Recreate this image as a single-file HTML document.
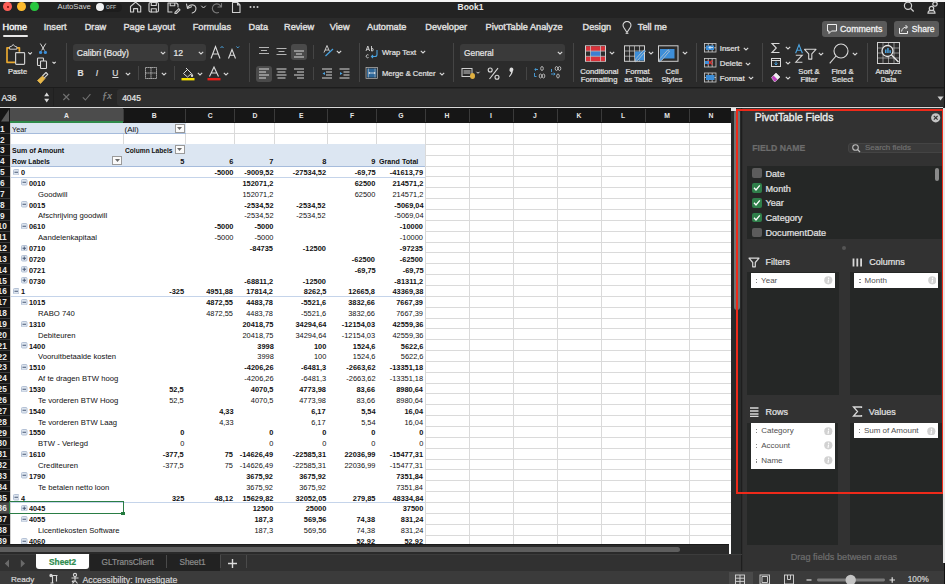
<!DOCTYPE html><html><head><meta charset="utf-8"><style>
*{margin:0;padding:0;box-sizing:border-box}
html,body{width:945px;height:584px;overflow:hidden;background:#2c2c2c;font-family:"Liberation Sans",sans-serif}
.a{position:absolute}
.t{position:absolute;white-space:nowrap;line-height:1}
#titlebar{left:0;top:0;width:945px;height:14px;background:#252525}
#tabs{left:0;top:14px;width:945px;height:24px;background:#2b2b2b}
#ribbon{left:0;top:38px;width:945px;height:49px;background:#2b2b2b}
#fbar{left:0;top:87px;width:945px;height:20px;background:#262626}
.tab{color:#e6e6e6;font-size:9.2px;font-weight:normal;top:23px;-webkit-text-stroke:.45px currentColor}
.rt{color:#e8e8e8;font-size:7.5px;font-weight:bold}
.sep{position:absolute;width:1px;background:#444}
.cell{position:absolute;white-space:nowrap;line-height:1;font-size:7.4px;color:#111}
.b{font-weight:bold}
.num{text-align:right}
.hdr{position:absolute;background:#161616;color:#e0e0e0;font-size:7px;font-weight:bold;text-align:center;line-height:14px}
.rh{position:absolute;left:0;width:10px;background:#161616;color:#e6e6e6;font-size:7.5px;font-weight:bold;overflow:hidden}
.rh span{position:absolute;right:3px;bottom:1px;line-height:1}
.btn{position:absolute;width:6px;height:6px;border:1px solid #a9b6c9;background:#e9eef5;border-radius:1px}
.btn i{position:absolute;left:1px;top:1.5px;width:2px;height:1px;background:#5a6a85}
</style></head><body>
<div class="a" style="left:0;top:0;width:945px;height:2px;background:#f4f4f4"></div>
<div class="a" id="tabs"></div>
<div class="a" id="titlebar" style="top:2px;height:15.6px;background:#232323"></div>
<div class="a" id="ribbon"></div>
<div class="a" id="fbar"></div>
<div class="a" style="left:3.1999999999999993px;top:2.3px;width:8.8px;height:8.8px;border-radius:50%;background:#fe5f57"></div>
<div class="a" style="left:16.9px;top:2.3px;width:8.8px;height:8.8px;border-radius:50%;background:#febc2e"></div>
<div class="a" style="left:30.4px;top:2.3px;width:8.8px;height:8.8px;border-radius:50%;background:#28c840"></div>
<div class="a" style="left:6.6px;top:5.7px;width:2px;height:2px;border-radius:50%;background:#7a0d06"></div>
<div class="t" style="left:57.5px;top:3.3px;font-size:7.7px;color:#d8d8d8">AutoSave</div>
<div class="a" style="left:95px;top:2.5px;width:27px;height:9px;border-radius:5px;background:#1d1d1d"></div>
<div class="a" style="left:95.5px;top:3px;width:8px;height:8px;border-radius:50%;background:#f2f2f2"></div>
<div class="t" style="left:106px;top:5px;font-size:5px;color:#aaa;font-weight:bold">OFF</div>
<div class="t" style="left:457.5px;top:3px;font-size:8.5px;color:#e8e8e8;font-weight:bold">Book1</div>
<svg class="a" style="left:128px;top:0;width:140px;height:14px" viewBox="128 0 140 14">
<g fill="none" stroke="#cfcfcf" stroke-width="1.1" stroke-linejoin="round" stroke-linecap="round">
<path d="M130.5 12V6.5L135.6 2.2L140.7 6.5V12H137.6V8.6H133.6V12Z"/>
<rect x="149" y="2.5" width="9.5" height="9.5" rx="1.5"/><path d="M151.3 2.5v3h5v-3M151.3 12V8.8h5V12"/>
<path d="M168 3h8.5l1.5 1.5v2.5M168 3v9h4M170.2 3v2.8h4.6V3M175 12.5l3.8-3.8 1.2 1.2-3.8 3.8h-1.2z"/>
<path d="M186.5 4l1 4.5 4-1.8M187.4 8.2c1-2.6 4-4 6.5-3 2 .8 2.6 3.3 1.5 5.5-.7 1.3-2 2-3.2 2.3"/>
<path d="M201.5 6l2 2 2-2" stroke-width="1"/>
<path d="M221.5 3.5v3.5H218M221 6.8c-.8-2.3-3.5-3.5-5.8-2.6-2.3.9-3.4 3.6-2.5 5.8.9 2.3 3.6 3.4 5.8 2.5" stroke="#7a7a7a"/>
<path d="M232.5 2.5h5l2.5 2.5v7.5h-7.5zM237.5 2.5V5H240"/>
</g>
<g fill="#cfcfcf"><circle cx="250.5" cy="7" r="1"/><circle cx="254" cy="7" r="1"/><circle cx="257.5" cy="7" r="1"/></g>
</svg>
<svg class="a" style="left:900px;top:0;width:45px;height:14px" viewBox="900 0 45 14">
<g fill="none" stroke="#d0d0d0" stroke-width="1.2"><circle cx="908" cy="5.8" r="3.6"/><path d="M910.7 8.5l3 3"/>
<circle cx="931.5" cy="8.5" r="2.2"/><path d="M928 13.2c0-2 1.5-2.8 3.5-2.8s3.5.8 3.5 2.8z"/><circle cx="935" cy="4" r="2.2"/></g></svg>
<div class="t tab" style="left:2.5px;color:#f2f2f2">Home</div>
<div class="t tab" style="left:43.7px;color:#dcdcdc">Insert</div>
<div class="t tab" style="left:84.7px;color:#dcdcdc">Draw</div>
<div class="t tab" style="left:123.4px;color:#dcdcdc">Page Layout</div>
<div class="t tab" style="left:192.7px;color:#dcdcdc">Formulas</div>
<div class="t tab" style="left:248.6px;color:#dcdcdc">Data</div>
<div class="t tab" style="left:284px;color:#dcdcdc">Review</div>
<div class="t tab" style="left:329.8px;color:#dcdcdc">View</div>
<div class="t tab" style="left:367px;color:#dcdcdc">Automate</div>
<div class="t tab" style="left:425.3px;color:#dcdcdc">Developer</div>
<div class="t tab" style="left:485.5px;color:#dcdcdc">PivotTable Analyze</div>
<div class="t tab" style="left:582.5px;color:#dcdcdc">Design</div>
<div class="a" style="left:2.5px;top:34.8px;width:25px;height:2px;border-radius:1px;background:#e8e8e8"></div>
<svg class="a" style="left:620px;top:21px;width:14px;height:14px" viewBox="0 0 14 14"><g fill="none" stroke="#d6d6d6" stroke-width="1.1" stroke-linejoin="round"><path d="M7 11.5L3.6 6.2a3.9 3.9 0 1 1 6.8 0z"/><path d="M5.6 12.3h2.8"/></g></svg>
<div class="t tab" style="left:637.8px;color:#dcdcdc">Tell me</div>
<div class="a" style="left:822px;top:20.6px;width:65px;height:16px;border-radius:3px;background:#5a5a5a"></div>
<div class="t" style="left:839.9px;top:25px;font-size:8.8px;color:#f0f0f0;-webkit-text-stroke:.3px #f0f0f0">Comments</div>
<svg class="a" style="left:826px;top:23px;width:12px;height:12px" viewBox="0 0 12 12"><path d="M1.5 1.5h9v6.5H5.5L3 10.5V8H1.5z" fill="none" stroke="#eee" stroke-width="1"/></svg>
<div class="a" style="left:894px;top:20.6px;width:45px;height:16px;border-radius:3px;background:#5a5a5a"></div>
<div class="t" style="left:911.8px;top:25px;font-size:8.5px;color:#f0f0f0;-webkit-text-stroke:.3px #f0f0f0">Share</div>
<svg class="a" style="left:898px;top:23px;width:12px;height:12px" viewBox="0 0 12 12"><g fill="none" stroke="#eee" stroke-width="1"><path d="M1.5 5v5.5h8V8"/><path d="M3.5 8.5c.5-3 2.5-4.5 5.5-4.5M7.5 2l2 2-2 2"/></g></svg>
<div class="sep" style="left:65.6px;top:43px;height:39px;background:#454545"></div>
<div class="sep" style="left:248.6px;top:43px;height:39px;background:#454545"></div>
<div class="sep" style="left:358.7px;top:43px;height:39px;background:#454545"></div>
<div class="sep" style="left:453.3px;top:43px;height:39px;background:#454545"></div>
<div class="sep" style="left:573px;top:43px;height:39px;background:#454545"></div>
<div class="sep" style="left:696px;top:43px;height:39px;background:#454545"></div>
<div class="sep" style="left:762.3px;top:43px;height:39px;background:#454545"></div>
<div class="sep" style="left:866.7px;top:43px;height:39px;background:#454545"></div>
<svg class="a" style="left:0;top:38px;width:65px;height:49px" viewBox="0 38 65 49">
<g fill="none" stroke-linejoin="round">
<path d="M9.5 47.8H7v14.5h8M17 47.8h2.4v4" stroke="#e8a830" stroke-width="1.7"/>
<path d="M9.6 49.2v-2.4l2.2-.6 1.4-1.8 1.4 1.8 2.2.6v2.4z" stroke="#c8c8c8" stroke-width="1" fill="#2b2b2b"/>
<rect x="15.6" y="52.6" width="9" height="11.8" rx=".8" stroke="#cdcdcd" stroke-width="1.2" fill="#2b2b2b"/>
<path d="M28.3 52.3l1.8 1.8 1.8-1.8" stroke="#ddd" stroke-width="1.1"/>
<path d="M40.3 43.5l4.2 7M45.8 43.5l-4.2 7" stroke="#d8d8d8" stroke-width="1"/>
<circle cx="40.6" cy="52.4" r="1.6" fill="#3d8fd8"/><circle cx="45.4" cy="52.4" r="1.6" fill="#3d8fd8"/>
<rect x="37.5" y="58" width="6" height="7.5" rx=".8" stroke="#d8d8d8" stroke-width="1.1"/>
<rect x="40.5" y="61" width="6" height="7.5" rx=".8" stroke="#d8d8d8" stroke-width="1.1" fill="#2c2c2c"/>
<path d="M52.5 61.8l1.6 1.6 1.6-1.6" stroke="#ddd" stroke-width="1.1"/>
<path d="M37.5 80.5l5-4.5 2.5 2.5-4.5 5z" fill="#e8b84a" stroke="#e8b84a" stroke-width=".8"/>
<path d="M42.5 76l3.5-3.5 1.8 1.8-3.5 3.5" stroke="#d8d8d8" stroke-width="1.1"/>
</g></svg>
<div class="t" style="left:7.9px;top:68.1px;font-size:7.5px;color:#e0e0e0;font-weight:normal;-webkit-text-stroke:0.22px #e0e0e0;">Paste</div>
<div class="a" style="left:72.8px;top:44.3px;width:95.2px;height:16.4px;border-radius:3px;background:#3a3a3a"></div>
<div class="t" style="left:76.7px;top:48.5px;font-size:8.65px;color:#e6e6e6;font-weight:normal;-webkit-text-stroke:0.22px #e6e6e6;">Calibri (Body)</div>
<svg class="a" style="left:159.5px;top:50.6px;width:6px;height:4px" viewBox="0 0 6 4"><path d="M.8.8L3 3 5.2.8" fill="none" stroke="#d8d8d8" stroke-width="1.1"/></svg>
<div class="a" style="left:169.8px;top:44.3px;width:36.5px;height:16.4px;border-radius:3px;background:#3a3a3a"></div>
<div class="t" style="left:173.5px;top:48.5px;font-size:8.65px;color:#e6e6e6;font-weight:normal;-webkit-text-stroke:0.22px #e6e6e6;">12</div>
<svg class="a" style="left:198px;top:50.6px;width:6px;height:4px" viewBox="0 0 6 4"><path d="M.8.8L3 3 5.2.8" fill="none" stroke="#d8d8d8" stroke-width="1.1"/></svg>
<svg class="a" style="left:208px;top:44px;width:32px;height:16px" viewBox="208 44 32 16">
<g fill="none" stroke="#dcdcdc" stroke-width="1.1"><path d="M211 58.5l4.5-12 4.5 12M212.8 54h5.4"/><path d="M228.5 58.5l3.5-9 3.5 9M229.8 55.2h4.4"/></g>
<path d="M220.5 48l1.5-1.6 1.5 1.6" fill="none" stroke="#4aa3e0" stroke-width="1"/><path d="M236.5 46.5l1.3 1.4 1.3-1.4" fill="none" stroke="#4aa3e0" stroke-width="1"/>
</svg>
<div class="t" style="left:77.5px;top:69.3px;font-size:8.5px;color:#dcdcdc;font-weight:bold;-webkit-text-stroke:0.22px #dcdcdc;">B</div>
<div class="t" style="left:95.7px;top:69.3px;font-size:8.5px;color:#dcdcdc;font-weight:normal;-webkit-text-stroke:0.22px #dcdcdc;font-style:italic">I</div>
<div class="t" style="left:112.3px;top:69.3px;font-size:8.5px;color:#dcdcdc;font-weight:normal;-webkit-text-stroke:0.22px #dcdcdc;text-decoration:underline">U</div>
<svg class="a" style="left:125.30000000000001px;top:71.8px;width:6px;height:4px" viewBox="0 0 6 4"><path d="M.8.8L3 3 5.2.8" fill="none" stroke="#d8d8d8" stroke-width="1.1"/></svg>
<div class="sep" style="left:138px;top:66px;height:14px;background:#454545"></div>
<svg class="a" style="left:144px;top:66px;width:14px;height:14px" viewBox="0 0 14 14"><g fill="none" stroke="#cfcfcf" stroke-width="1" stroke-dasharray="1.2 .8"><rect x="1.5" y="1.5" width="11" height="11"/><path d="M7 1.5v11M1.5 7h11"/></g></svg>
<svg class="a" style="left:161px;top:71.8px;width:6px;height:4px" viewBox="0 0 6 4"><path d="M.8.8L3 3 5.2.8" fill="none" stroke="#d8d8d8" stroke-width="1.1"/></svg>
<div class="sep" style="left:173.8px;top:66px;height:14px;background:#454545"></div>
<svg class="a" style="left:180px;top:65px;width:16px;height:16px" viewBox="0 0 16 16"><g fill="none" stroke="#dcdcdc" stroke-width="1"><path d="M3.5 8.5l4-4 4 4-4 3.5z"/><path d="M6 3l2 2"/></g><path d="M12 8.5c.8 1.2 1.2 1.8 1.2 2.3a1.2 1.2 0 0 1-2.4 0c0-.5.4-1.1 1.2-2.3z" fill="#dcdcdc"/><rect x="1.5" y="13" width="13" height="2.4" fill="#f5e000"/></svg>
<svg class="a" style="left:197.3px;top:71.8px;width:6px;height:4px" viewBox="0 0 6 4"><path d="M.8.8L3 3 5.2.8" fill="none" stroke="#d8d8d8" stroke-width="1.1"/></svg>
<svg class="a" style="left:206px;top:65px;width:16px;height:16px" viewBox="0 0 16 16"><path d="M3.5 11.5L8 2l4.5 9.5M5.2 8h5.6" fill="none" stroke="#dcdcdc" stroke-width="1.1"/><rect x="1.5" y="13" width="13" height="2.4" fill="#e8201a"/></svg>
<svg class="a" style="left:223.2px;top:71.8px;width:6px;height:4px" viewBox="0 0 6 4"><path d="M.8.8L3 3 5.2.8" fill="none" stroke="#d8d8d8" stroke-width="1.1"/></svg>
<div class="a" style="left:291.2px;top:44.3px;width:16.3px;height:16px;border-radius:3px;background:#4a4a4a"></div>
<div class="a" style="left:255.8px;top:65.5px;width:16.2px;height:16px;border-radius:3px;background:#4a4a4a"></div>
<svg class="a" style="left:250px;top:40px;width:110px;height:46px" viewBox="250 40 110 46">
<g stroke="#d8d8d8" stroke-width="1.1" fill="none">
<path d="M259 47.5h10M261 50.5h6M259 53.5h10" stroke="#b4b4b4" stroke-width="1"/>
<path d="M276.5 48.5h10M278.5 51.5h6M276.5 54.5h10" stroke="#b4b4b4" stroke-width="1"/>
<path d="M294 51h10M296 54h6M294 57h10"/>
<path d="M259 69h10M259 72h7M259 75h10M259 78h7"/>
<path d="M276.5 69h10M277.5 72h8M276.5 75h10M277.5 78h8"/>
<path d="M294 69h10M297 72h7M294 75h10M297 78h7"/>
<path d="M322 69h10M326 72h6M326 75h6M322 78h10"/>
<path d="M339.5 69h10M343.5 72h6M343.5 75h6M339.5 78h10"/>
</g>
<path d="M325 72l-2.5 1.5 2.5 1.5z" fill="#4aa3e0"/><path d="M340 72l2.5 1.5-2.5 1.5z" fill="#4aa3e0"/>
<g fill="none" stroke="#d8d8d8" stroke-width=".9"><path d="M324 52.5l3-7 2.5 6M325 50h3.5"/></g>
<path d="M325.5 56l7.5-7" stroke="#4aa3e0" stroke-width="1.2"/>
</svg>
<div class="sep" style="left:313.3px;top:45px;height:14px;background:#454545"></div>
<div class="sep" style="left:313.3px;top:67px;height:13px;background:#454545"></div>
<svg class="a" style="left:336.4px;top:50.2px;width:6px;height:4px" viewBox="0 0 6 4"><path d="M.8.8L3 3 5.2.8" fill="none" stroke="#d8d8d8" stroke-width="1.1"/></svg>
<svg class="a" style="left:364px;top:43px;width:16px;height:36px" viewBox="364 43 16 36">
<g fill="none" stroke="#d8d8d8" stroke-width=".9"><path d="M366 51l1.8-5 1.8 5M366.6 49.3h2.4M371.5 46v5M371.5 48.5a1.3 1.3 0 1 1 0 2.5"/><path d="M368.5 55a1.5 1.5 0 1 0 0 2.5"/></g>
<path d="M377 50v4.5a2 2 0 0 1-2 2h-3M373 55l-1.5 1.5 1.5 1.5" fill="none" stroke="#4aa3e0" stroke-width="1.1"/>
<rect x="366" y="67.5" width="11.5" height="11" fill="none" stroke="#bcbcbc" stroke-width=".7"/>
<rect x="367" y="68.5" width="9.5" height="9" fill="#2f78b8" opacity=".8"/><path d="M368.5 68.5v9M375 68.5v9" stroke="#bcbcbc" stroke-width=".6"/>
<path d="M369 73h6M369.8 72l-1 1 1 1M374.2 72l1 1-1 1" fill="none" stroke="#eee" stroke-width=".8"/>
</svg>
<div class="t" style="left:382px;top:48.6px;font-size:7.66px;color:#e0e0e0;font-weight:normal;-webkit-text-stroke:0.22px #e0e0e0;">Wrap Text</div>
<svg class="a" style="left:419.5px;top:50.2px;width:6px;height:4px" viewBox="0 0 6 4"><path d="M.8.8L3 3 5.2.8" fill="none" stroke="#d8d8d8" stroke-width="1.1"/></svg>
<div class="t" style="left:382px;top:69.8px;font-size:7.6px;color:#e0e0e0;font-weight:normal;-webkit-text-stroke:0.22px #e0e0e0;">Merge &amp; Center</div>
<svg class="a" style="left:438.6px;top:71.5px;width:6px;height:4px" viewBox="0 0 6 4"><path d="M.8.8L3 3 5.2.8" fill="none" stroke="#d8d8d8" stroke-width="1.1"/></svg>
<div class="a" style="left:459.8px;top:44.3px;width:105.2px;height:16.4px;border-radius:3px;background:#3a3a3a"></div>
<div class="t" style="left:464px;top:48.5px;font-size:8.35px;color:#e6e6e6;font-weight:normal;-webkit-text-stroke:0.22px #e6e6e6;">General</div>
<svg class="a" style="left:556.5px;top:50.6px;width:6px;height:4px" viewBox="0 0 6 4"><path d="M.8.8L3 3 5.2.8" fill="none" stroke="#d8d8d8" stroke-width="1.1"/></svg>
<svg class="a" style="left:460px;top:64px;width:110px;height:18px" viewBox="460 64 110 18">
<g fill="none" stroke="#cfcfcf" stroke-width="1"><rect x="462" y="68.5" width="10" height="8"/><path d="M463.5 71h7M463.5 73h7"/></g>
<ellipse cx="472.5" cy="76" rx="2.5" ry="3" fill="#e0b040"/>
<path d="M476.5 71.8l1.5 1.5 1.5-1.5" fill="none" stroke="#ddd" stroke-width="1"/>
<g fill="none" stroke="#dcdcdc" stroke-width="1.1"><circle cx="490.2" cy="70" r="2"/><circle cx="497" cy="77.2" r="2"/><path d="M498 68.2l-8.5 10.8"/></g>
<path d="M509.6 69.3a1.9 1.9 0 1 1 3.3 1.5c-.3 2.8-1.6 4.7-3.5 6.1l-.5-.6c1.3-1.3 2-2.6 2.2-4.3a1.9 1.9 0 0 1-1.5-2.7z" fill="#dcdcdc"/>
<g fill="none" stroke="#cfcfcf" stroke-width=".8"><ellipse cx="542" cy="68.5" rx="1.3" ry="2"/><ellipse cx="540.5" cy="76" rx="1.3" ry="2"/><ellipse cx="543.5" cy="76" rx="1.3" ry="2"/>
<ellipse cx="556.5" cy="68.5" rx="1.3" ry="2"/><ellipse cx="559.5" cy="68.5" rx="1.3" ry="2"/><ellipse cx="558" cy="76" rx="1.3" ry="2"/></g>
<path d="M538 69.5h-3M536 68.2l-1.3 1.3 1.3 1.3M534.5 73v3.5h2" fill="none" stroke="#4aa3e0" stroke-width=".9"/>
<path d="M551 74h4M553.8 72.7l1.3 1.3-1.3 1.3M551.5 69v3" fill="none" stroke="#4aa3e0" stroke-width=".9"/>
</svg>
<div class="sep" style="left:526px;top:67px;height:13px;background:#454545"></div>
<svg class="a" style="left:580px;top:42px;width:112px;height:22px" viewBox="580 42 112 22">
<rect x="585.5" y="45.8" width="20" height="15.5" fill="#2c2c2c" stroke="#cfcfcf" stroke-width="1"/>
<rect x="586" y="46.3" width="19" height="4.8" fill="#d9323a"/><rect x="586" y="56.4" width="19" height="4.8" fill="#d9323a"/>
<rect x="590.5" y="51.2" width="10" height="5.1" fill="#3d7fd0"/>
<path d="M590.5 46v15.5M600.5 46v15.5M585.5 51.1h20M585.5 56.3h20" stroke="#cfcfcf" stroke-width=".7"/>
<rect x="624.5" y="45.8" width="20" height="15.5" fill="none" stroke="#cfcfcf" stroke-width="1"/>
<path d="M629.5 46v15.5M634.5 46v15.5M639.5 46v15.5M624.5 51h20M624.5 56.2h20" stroke="#cfcfcf" stroke-width=".7"/>
<rect x="635" y="51.5" width="9" height="9" fill="#3d8ed8"/>
<path d="M635 62l3-2 7.5-9-1.5-1.3-8 9z" fill="#3d8ed8" stroke="#cfcfcf" stroke-width=".7"/>
<rect x="658.5" y="45.8" width="19.5" height="15.5" fill="none" stroke="#cfcfcf" stroke-width="1"/>
<rect x="660" y="49" width="14.5" height="9.5" fill="#3d8ed8"/>
<path d="M659 62l3-2 7.5-9-1.5-1.3-8 9z" fill="#3d8ed8" stroke="#cfcfcf" stroke-width=".7"/>
</svg>
<svg class="a" style="left:609.2px;top:50.6px;width:6px;height:4px" viewBox="0 0 6 4"><path d="M.8.8L3 3 5.2.8" fill="none" stroke="#d8d8d8" stroke-width="1.1"/></svg>
<svg class="a" style="left:648.2px;top:50.6px;width:6px;height:4px" viewBox="0 0 6 4"><path d="M.8.8L3 3 5.2.8" fill="none" stroke="#d8d8d8" stroke-width="1.1"/></svg>
<svg class="a" style="left:681.6px;top:50.6px;width:6px;height:4px" viewBox="0 0 6 4"><path d="M.8.8L3 3 5.2.8" fill="none" stroke="#d8d8d8" stroke-width="1.1"/></svg>
<div class="t" style="left:580.2px;top:68px;font-size:7.67px;color:#e0e0e0;font-weight:normal;-webkit-text-stroke:0.22px #e0e0e0;">Conditional</div>
<div class="t" style="left:580.8px;top:76.1px;font-size:7.67px;color:#e0e0e0;font-weight:normal;-webkit-text-stroke:0.22px #e0e0e0;">Formatting</div>
<div class="t" style="left:624.6px;top:68px;font-size:7.67px;color:#e0e0e0;font-weight:normal;-webkit-text-stroke:0.22px #e0e0e0;width:26px;text-align:center">Format</div>
<div class="t" style="left:624.2px;top:76.1px;font-size:7.67px;color:#e0e0e0;font-weight:normal;-webkit-text-stroke:0.22px #e0e0e0;">as Table</div>
<div class="t" style="left:660px;top:68px;font-size:7.67px;color:#e0e0e0;font-weight:normal;-webkit-text-stroke:0.22px #e0e0e0;width:24px;text-align:center">Cell</div>
<div class="t" style="left:661.4px;top:76.1px;font-size:7.67px;color:#e0e0e0;font-weight:normal;-webkit-text-stroke:0.22px #e0e0e0;">Styles</div>
<svg class="a" style="left:702px;top:42px;width:18px;height:42px" viewBox="702 42 18 42">
<g fill="none" stroke="#cfcfcf" stroke-width=".8"><rect x="704.5" y="43.5" width="11.5" height="8.5"/><path d="M708.3 43.5v8.5M712.2 43.5v8.5M704.5 47.8h11.5"/>
<rect x="704.5" y="58.5" width="11.5" height="8.5"/><path d="M708.3 58.5v8.5M712.2 58.5v8.5"/>
<rect x="704.5" y="73" width="11.5" height="9"/><path d="M708.3 73v9M712.2 73v9M704.5 77.5h11.5"/></g>
<rect x="706" y="45.5" width="8" height="4.5" fill="#3d8ed8"/><path d="M709 47.5h4M710.5 46l-1.5 1.5 1.5 1.5" stroke="#fff" stroke-width=".7" fill="none"/>
<path d="M707.5 60.5l5 4M712.5 60.5l-5 4" stroke="#e03030" stroke-width="1.2"/><rect x="705" y="61" width="4" height="3" fill="#3d8ed8"/>
<rect x="706" y="75" width="8.5" height="5" fill="#3d8ed8"/>
</svg>
<div class="t" style="left:719.7px;top:45.2px;font-size:7.9px;color:#e0e0e0;font-weight:normal;-webkit-text-stroke:0.22px #e0e0e0;">Insert</div>
<svg class="a" style="left:743px;top:46.7px;width:6px;height:4px" viewBox="0 0 6 4"><path d="M.8.8L3 3 5.2.8" fill="none" stroke="#d8d8d8" stroke-width="1.1"/></svg>
<div class="t" style="left:719.7px;top:60.1px;font-size:7.9px;color:#e0e0e0;font-weight:normal;-webkit-text-stroke:0.22px #e0e0e0;">Delete</div>
<svg class="a" style="left:745px;top:61.6px;width:6px;height:4px" viewBox="0 0 6 4"><path d="M.8.8L3 3 5.2.8" fill="none" stroke="#d8d8d8" stroke-width="1.1"/></svg>
<div class="t" style="left:719.7px;top:74.9px;font-size:7.9px;color:#e0e0e0;font-weight:normal;-webkit-text-stroke:0.22px #e0e0e0;">Format</div>
<svg class="a" style="left:747.7px;top:76.4px;width:6px;height:4px" viewBox="0 0 6 4"><path d="M.8.8L3 3 5.2.8" fill="none" stroke="#d8d8d8" stroke-width="1.1"/></svg>
<svg class="a" style="left:768px;top:40px;width:98px;height:46px" viewBox="768 40 98 46">
<path d="M779.5 43.5h-7.5l4.3 4.5-4.3 4.5h7.5" fill="none" stroke="#d8d8d8" stroke-width="1.1"/>
<rect x="771.5" y="58.5" width="9" height="8" fill="none" stroke="#d8d8d8" stroke-width="1"/><path d="M771.5 60.5h9" stroke="#d8d8d8" stroke-width="1"/>
<path d="M776 61.5v3.5M774.5 63.5l1.5 1.5 1.5-1.5" fill="none" stroke="#4aa3e0" stroke-width="1"/>
<path d="M771.5 77.5l4.5-4.5 4 4-4.5 4.5h-1.5z" fill="#c040c0" stroke="#d8d8d8" stroke-width=".6"/><path d="M776 73l4 4-2.5 2.5-4-4z" fill="#eee"/>
<path d="M795.6 53.2l3.4-8.4 3.4 8.4M796.8 50.3h4.4" fill="none" stroke="#4aa3e0" stroke-width="1.1"/>
<path d="M795.8 55.2h6.4l-6.4 7h6.6" fill="none" stroke="#d8d8d8" stroke-width="1.1"/>
<path d="M804.5 49.3h11.5l-4.2 4.6v5.2h-3.1v-5.2z" fill="none" stroke="#d8d8d8" stroke-width="1.1" stroke-linejoin="round"/>
<circle cx="841" cy="51" r="7" fill="none" stroke="#d8d8d8" stroke-width="1.1"/><path d="M836 56l-6.3 7.3" stroke="#d8d8d8" stroke-width="1.1"/>
</svg>
<svg class="a" style="left:784.7px;top:46px;width:6px;height:4px" viewBox="0 0 6 4"><path d="M.8.8L3 3 5.2.8" fill="none" stroke="#d8d8d8" stroke-width="1.1"/></svg>
<svg class="a" style="left:784.7px;top:61px;width:6px;height:4px" viewBox="0 0 6 4"><path d="M.8.8L3 3 5.2.8" fill="none" stroke="#d8d8d8" stroke-width="1.1"/></svg>
<svg class="a" style="left:784.7px;top:75.5px;width:6px;height:4px" viewBox="0 0 6 4"><path d="M.8.8L3 3 5.2.8" fill="none" stroke="#d8d8d8" stroke-width="1.1"/></svg>
<svg class="a" style="left:818.4px;top:51.5px;width:6px;height:4px" viewBox="0 0 6 4"><path d="M.8.8L3 3 5.2.8" fill="none" stroke="#d8d8d8" stroke-width="1.1"/></svg>
<svg class="a" style="left:852px;top:51.5px;width:6px;height:4px" viewBox="0 0 6 4"><path d="M.8.8L3 3 5.2.8" fill="none" stroke="#d8d8d8" stroke-width="1.1"/></svg>
<div class="t" style="left:797px;top:67.5px;font-size:7.67px;color:#e0e0e0;font-weight:normal;-webkit-text-stroke:0.22px #e0e0e0;width:24px;text-align:center">Sort &amp;</div>
<div class="t" style="left:797px;top:75.7px;font-size:7.67px;color:#e0e0e0;font-weight:normal;-webkit-text-stroke:0.22px #e0e0e0;width:24px;text-align:center">Filter</div>
<div class="t" style="left:830px;top:67.5px;font-size:7.67px;color:#e0e0e0;font-weight:normal;-webkit-text-stroke:0.22px #e0e0e0;width:25px;text-align:center">Find &amp;</div>
<div class="t" style="left:830px;top:75.7px;font-size:7.67px;color:#e0e0e0;font-weight:normal;-webkit-text-stroke:0.22px #e0e0e0;width:25px;text-align:center">Select</div>
<svg class="a" style="left:874px;top:40px;width:30px;height:26px" viewBox="874 40 30 26">
<rect x="877.5" y="42.5" width="22" height="21" fill="none" stroke="#cfcfcf" stroke-width="1"/>
<path d="M877.5 48h22M877.5 53h22M877.5 58h22M883 42.5v21M888.5 42.5v21M894 42.5v21" stroke="#cfcfcf" stroke-width=".6"/>
<circle cx="887.5" cy="51" r="5.5" fill="#2c2c2c" stroke="#e6e6e6" stroke-width="1.3"/>
<path d="M891.5 55l7 7" stroke="#e6e6e6" stroke-width="1.4"/>
<rect x="885" y="49.5" width="1.5" height="3.5" fill="#4aa3e0"/><rect x="887.2" y="48" width="1.5" height="5" fill="#4aa3e0"/><rect x="889.4" y="50.2" width="1.5" height="2.8" fill="#4aa3e0"/>
</svg>
<div class="t" style="left:875.4px;top:67.5px;font-size:7.4px;color:#e0e0e0;font-weight:normal;-webkit-text-stroke:0.22px #e0e0e0;">Analyze</div>
<div class="t" style="left:876px;top:75.7px;font-size:7.4px;color:#e0e0e0;font-weight:normal;-webkit-text-stroke:0.22px #e0e0e0;width:25px;text-align:center">Data</div>
<div class="a" style="left:0;top:86.5px;width:945px;height:1px;background:#1c1c1c"></div>
<div class="t" style="left:1.4px;top:94px;font-size:8.5px;color:#e6e6e6;font-weight:normal;-webkit-text-stroke:0.22px #e6e6e6;">A36</div>
<svg class="a" style="left:42px;top:88px;width:80px;height:19px" viewBox="42 88 80 19">
<path d="M44.2 96.2l2.5-3.7 2.5 3.7z M44.2 98.7l2.5 3.7 2.5-3.7z" fill="#d8d8d8"/>
<path d="M63.3 94l6 6M69.3 94l-6 6" stroke="#707070" stroke-width="1.1"/>
<path d="M82.8 97.3l2.6 2.7 5-5.8" fill="none" stroke="#707070" stroke-width="1.1"/>
</svg>
<div class="sep" style="left:52.5px;top:88px;height:18px;background:#202020"></div>
<div class="t" style="left:102px;top:91.3px;font-size:10.5px;color:#8a8a8a;font-weight:normal;-webkit-text-stroke:0.22px #8a8a8a;font-family:Liberation Serif;font-style:italic">&#402;x</div>
<div class="a" style="left:116.8px;top:89px;width:830px;height:17px;border-radius:3px 0 0 3px;background:#2f2f2f"></div>
<div class="t" style="left:122.2px;top:94px;font-size:8.4px;color:#e6e6e6;font-weight:normal;-webkit-text-stroke:0.22px #e6e6e6;">4045</div>
<svg class="a" style="left:937.3px;top:95.8px;width:7px;height:5px" viewBox="0 0 7 5"><path d="M.5.5h6L3.5 4.5z" fill="#cfcfcf"/></svg>
<div class="a" style="left:0;top:106.6px;width:943px;height:1.5px;background:#d8d8d8"></div>
<div class="a" style="left:10px;top:122.7px;width:723px;height:421.3px;background:#ffffff"></div>
<div class="a" style="left:0;top:108.1px;width:733px;height:14.600000000000009px;background:#161616"></div>
<svg class="a" style="left:0;top:108.1px;width:10px;height:14.6px" viewBox="0 0 10 14.6"><path d="M9 1.5V13.5H1z" fill="#5a5a5a"/></svg>
<div class="a" style="left:10px;top:108.1px;width:113px;height:14.600000000000009px;background:#4c4c4c"></div>
<div class="a" style="left:10px;top:121.4px;width:113px;height:1.3px;background:#2f8a4a"></div>
<div class="t" style="left:10px;top:113px;width:113px;text-align:center;font-size:6.8px;font-weight:bold;color:#e6e6e6">A</div>
<div class="t" style="left:123px;top:113px;width:62.599999999999994px;text-align:center;font-size:6.8px;font-weight:bold;color:#e6e6e6">B</div>
<div class="a" style="left:122.5px;top:109px;width:1px;height:13px;background:#3a3a3a"></div>
<div class="t" style="left:185.6px;top:113px;width:49.20000000000002px;text-align:center;font-size:6.8px;font-weight:bold;color:#e6e6e6">C</div>
<div class="a" style="left:185.1px;top:109px;width:1px;height:13px;background:#3a3a3a"></div>
<div class="t" style="left:234.8px;top:113px;width:40.099999999999966px;text-align:center;font-size:6.8px;font-weight:bold;color:#e6e6e6">D</div>
<div class="a" style="left:234.3px;top:109px;width:1px;height:13px;background:#3a3a3a"></div>
<div class="t" style="left:274.9px;top:113px;width:52.700000000000045px;text-align:center;font-size:6.8px;font-weight:bold;color:#e6e6e6">E</div>
<div class="a" style="left:274.4px;top:109px;width:1px;height:13px;background:#3a3a3a"></div>
<div class="t" style="left:327.6px;top:113px;width:49.19999999999999px;text-align:center;font-size:6.8px;font-weight:bold;color:#e6e6e6">F</div>
<div class="a" style="left:327.1px;top:109px;width:1px;height:13px;background:#3a3a3a"></div>
<div class="t" style="left:376.8px;top:113px;width:48.19999999999999px;text-align:center;font-size:6.8px;font-weight:bold;color:#e6e6e6">G</div>
<div class="a" style="left:376.3px;top:109px;width:1px;height:13px;background:#3a3a3a"></div>
<div class="t" style="left:425px;top:113px;width:44px;text-align:center;font-size:6.8px;font-weight:bold;color:#e6e6e6">H</div>
<div class="a" style="left:424.5px;top:109px;width:1px;height:13px;background:#3a3a3a"></div>
<div class="t" style="left:469px;top:113px;width:44px;text-align:center;font-size:6.8px;font-weight:bold;color:#e6e6e6">I</div>
<div class="a" style="left:468.5px;top:109px;width:1px;height:13px;background:#3a3a3a"></div>
<div class="t" style="left:513px;top:113px;width:44px;text-align:center;font-size:6.8px;font-weight:bold;color:#e6e6e6">J</div>
<div class="a" style="left:512.5px;top:109px;width:1px;height:13px;background:#3a3a3a"></div>
<div class="t" style="left:557px;top:113px;width:44px;text-align:center;font-size:6.8px;font-weight:bold;color:#e6e6e6">K</div>
<div class="a" style="left:556.5px;top:109px;width:1px;height:13px;background:#3a3a3a"></div>
<div class="t" style="left:601px;top:113px;width:44px;text-align:center;font-size:6.8px;font-weight:bold;color:#e6e6e6">L</div>
<div class="a" style="left:600.5px;top:109px;width:1px;height:13px;background:#3a3a3a"></div>
<div class="t" style="left:645px;top:113px;width:44px;text-align:center;font-size:6.8px;font-weight:bold;color:#e6e6e6">M</div>
<div class="a" style="left:644.5px;top:109px;width:1px;height:13px;background:#3a3a3a"></div>
<div class="t" style="left:689px;top:113px;width:44px;text-align:center;font-size:6.8px;font-weight:bold;color:#e6e6e6">N</div>
<div class="a" style="left:688.5px;top:109px;width:1px;height:13px;background:#3a3a3a"></div>
<div class="a" style="left:0;top:122.7px;width:10px;height:421.3px;background:#161616"></div>
<div class="a" style="left:0;top:502.45px;width:10px;height:10.85px;background:#4c4c4c"></div>
<div class="a" style="left:0;top:133.05px;width:10px;height:1px;background:#3a3a3a"></div>
<div class="t" style="left:-17.8px;width:40px;text-align:center;top:124.70px;font-size:8.3px;font-weight:bold;color:#e8e8e8">1</div>
<div class="a" style="left:0;top:143.90px;width:10px;height:1px;background:#3a3a3a"></div>
<div class="t" style="left:-17.8px;width:40px;text-align:center;top:135.55px;font-size:8.3px;font-weight:bold;color:#e8e8e8">2</div>
<div class="a" style="left:0;top:154.75px;width:10px;height:1px;background:#3a3a3a"></div>
<div class="t" style="left:-17.8px;width:40px;text-align:center;top:146.40px;font-size:8.3px;font-weight:bold;color:#e8e8e8">3</div>
<div class="a" style="left:0;top:165.60px;width:10px;height:1px;background:#3a3a3a"></div>
<div class="t" style="left:-17.8px;width:40px;text-align:center;top:157.25px;font-size:8.3px;font-weight:bold;color:#e8e8e8">4</div>
<div class="a" style="left:0;top:176.45px;width:10px;height:1px;background:#3a3a3a"></div>
<div class="t" style="left:-17.8px;width:40px;text-align:center;top:168.10px;font-size:8.3px;font-weight:bold;color:#e8e8e8">5</div>
<div class="a" style="left:0;top:187.30px;width:10px;height:1px;background:#3a3a3a"></div>
<div class="t" style="left:-17.8px;width:40px;text-align:center;top:178.95px;font-size:8.3px;font-weight:bold;color:#e8e8e8">6</div>
<div class="a" style="left:0;top:198.15px;width:10px;height:1px;background:#3a3a3a"></div>
<div class="t" style="left:-17.8px;width:40px;text-align:center;top:189.80px;font-size:8.3px;font-weight:bold;color:#e8e8e8">7</div>
<div class="a" style="left:0;top:209.00px;width:10px;height:1px;background:#3a3a3a"></div>
<div class="t" style="left:-17.8px;width:40px;text-align:center;top:200.65px;font-size:8.3px;font-weight:bold;color:#e8e8e8">8</div>
<div class="a" style="left:0;top:219.85px;width:10px;height:1px;background:#3a3a3a"></div>
<div class="t" style="left:-17.8px;width:40px;text-align:center;top:211.50px;font-size:8.3px;font-weight:bold;color:#e8e8e8">9</div>
<div class="a" style="left:0;top:230.70px;width:10px;height:1px;background:#3a3a3a"></div>
<div class="t" style="left:-17.8px;width:40px;text-align:center;top:222.35px;font-size:8.3px;font-weight:bold;color:#e8e8e8">10</div>
<div class="a" style="left:0;top:241.55px;width:10px;height:1px;background:#3a3a3a"></div>
<div class="t" style="left:-17.8px;width:40px;text-align:center;top:233.20px;font-size:8.3px;font-weight:bold;color:#e8e8e8">11</div>
<div class="a" style="left:0;top:252.40px;width:10px;height:1px;background:#3a3a3a"></div>
<div class="t" style="left:-17.8px;width:40px;text-align:center;top:244.05px;font-size:8.3px;font-weight:bold;color:#e8e8e8">12</div>
<div class="a" style="left:0;top:263.25px;width:10px;height:1px;background:#3a3a3a"></div>
<div class="t" style="left:-17.8px;width:40px;text-align:center;top:254.90px;font-size:8.3px;font-weight:bold;color:#e8e8e8">13</div>
<div class="a" style="left:0;top:274.10px;width:10px;height:1px;background:#3a3a3a"></div>
<div class="t" style="left:-17.8px;width:40px;text-align:center;top:265.75px;font-size:8.3px;font-weight:bold;color:#e8e8e8">14</div>
<div class="a" style="left:0;top:284.95px;width:10px;height:1px;background:#3a3a3a"></div>
<div class="t" style="left:-17.8px;width:40px;text-align:center;top:276.60px;font-size:8.3px;font-weight:bold;color:#e8e8e8">15</div>
<div class="a" style="left:0;top:295.80px;width:10px;height:1px;background:#3a3a3a"></div>
<div class="t" style="left:-17.8px;width:40px;text-align:center;top:287.45px;font-size:8.3px;font-weight:bold;color:#e8e8e8">16</div>
<div class="a" style="left:0;top:306.65px;width:10px;height:1px;background:#3a3a3a"></div>
<div class="t" style="left:-17.8px;width:40px;text-align:center;top:298.30px;font-size:8.3px;font-weight:bold;color:#e8e8e8">17</div>
<div class="a" style="left:0;top:317.50px;width:10px;height:1px;background:#3a3a3a"></div>
<div class="t" style="left:-17.8px;width:40px;text-align:center;top:309.15px;font-size:8.3px;font-weight:bold;color:#e8e8e8">18</div>
<div class="a" style="left:0;top:328.35px;width:10px;height:1px;background:#3a3a3a"></div>
<div class="t" style="left:-17.8px;width:40px;text-align:center;top:320.00px;font-size:8.3px;font-weight:bold;color:#e8e8e8">19</div>
<div class="a" style="left:0;top:339.20px;width:10px;height:1px;background:#3a3a3a"></div>
<div class="t" style="left:-17.8px;width:40px;text-align:center;top:330.85px;font-size:8.3px;font-weight:bold;color:#e8e8e8">20</div>
<div class="a" style="left:0;top:350.05px;width:10px;height:1px;background:#3a3a3a"></div>
<div class="t" style="left:-17.8px;width:40px;text-align:center;top:341.70px;font-size:8.3px;font-weight:bold;color:#e8e8e8">21</div>
<div class="a" style="left:0;top:360.90px;width:10px;height:1px;background:#3a3a3a"></div>
<div class="t" style="left:-17.8px;width:40px;text-align:center;top:352.55px;font-size:8.3px;font-weight:bold;color:#e8e8e8">22</div>
<div class="a" style="left:0;top:371.75px;width:10px;height:1px;background:#3a3a3a"></div>
<div class="t" style="left:-17.8px;width:40px;text-align:center;top:363.40px;font-size:8.3px;font-weight:bold;color:#e8e8e8">23</div>
<div class="a" style="left:0;top:382.60px;width:10px;height:1px;background:#3a3a3a"></div>
<div class="t" style="left:-17.8px;width:40px;text-align:center;top:374.25px;font-size:8.3px;font-weight:bold;color:#e8e8e8">24</div>
<div class="a" style="left:0;top:393.45px;width:10px;height:1px;background:#3a3a3a"></div>
<div class="t" style="left:-17.8px;width:40px;text-align:center;top:385.10px;font-size:8.3px;font-weight:bold;color:#e8e8e8">25</div>
<div class="a" style="left:0;top:404.30px;width:10px;height:1px;background:#3a3a3a"></div>
<div class="t" style="left:-17.8px;width:40px;text-align:center;top:395.95px;font-size:8.3px;font-weight:bold;color:#e8e8e8">26</div>
<div class="a" style="left:0;top:415.15px;width:10px;height:1px;background:#3a3a3a"></div>
<div class="t" style="left:-17.8px;width:40px;text-align:center;top:406.80px;font-size:8.3px;font-weight:bold;color:#e8e8e8">27</div>
<div class="a" style="left:0;top:426.00px;width:10px;height:1px;background:#3a3a3a"></div>
<div class="t" style="left:-17.8px;width:40px;text-align:center;top:417.65px;font-size:8.3px;font-weight:bold;color:#e8e8e8">28</div>
<div class="a" style="left:0;top:436.85px;width:10px;height:1px;background:#3a3a3a"></div>
<div class="t" style="left:-17.8px;width:40px;text-align:center;top:428.50px;font-size:8.3px;font-weight:bold;color:#e8e8e8">29</div>
<div class="a" style="left:0;top:447.70px;width:10px;height:1px;background:#3a3a3a"></div>
<div class="t" style="left:-17.8px;width:40px;text-align:center;top:439.35px;font-size:8.3px;font-weight:bold;color:#e8e8e8">30</div>
<div class="a" style="left:0;top:458.55px;width:10px;height:1px;background:#3a3a3a"></div>
<div class="t" style="left:-17.8px;width:40px;text-align:center;top:450.20px;font-size:8.3px;font-weight:bold;color:#e8e8e8">31</div>
<div class="a" style="left:0;top:469.40px;width:10px;height:1px;background:#3a3a3a"></div>
<div class="t" style="left:-17.8px;width:40px;text-align:center;top:461.05px;font-size:8.3px;font-weight:bold;color:#e8e8e8">32</div>
<div class="a" style="left:0;top:480.25px;width:10px;height:1px;background:#3a3a3a"></div>
<div class="t" style="left:-17.8px;width:40px;text-align:center;top:471.90px;font-size:8.3px;font-weight:bold;color:#e8e8e8">33</div>
<div class="a" style="left:0;top:491.10px;width:10px;height:1px;background:#3a3a3a"></div>
<div class="t" style="left:-17.8px;width:40px;text-align:center;top:482.75px;font-size:8.3px;font-weight:bold;color:#e8e8e8">34</div>
<div class="a" style="left:0;top:501.95px;width:10px;height:1px;background:#3a3a3a"></div>
<div class="t" style="left:-17.8px;width:40px;text-align:center;top:493.60px;font-size:8.3px;font-weight:bold;color:#e8e8e8">35</div>
<div class="a" style="left:0;top:512.80px;width:10px;height:1px;background:#3a3a3a"></div>
<div class="t" style="left:-17.8px;width:40px;text-align:center;top:504.45px;font-size:8.3px;font-weight:bold;color:#e8e8e8">36</div>
<div class="a" style="left:0;top:523.65px;width:10px;height:1px;background:#3a3a3a"></div>
<div class="t" style="left:-17.8px;width:40px;text-align:center;top:515.30px;font-size:8.3px;font-weight:bold;color:#e8e8e8">37</div>
<div class="a" style="left:0;top:534.50px;width:10px;height:1px;background:#3a3a3a"></div>
<div class="t" style="left:-17.8px;width:40px;text-align:center;top:526.15px;font-size:8.3px;font-weight:bold;color:#e8e8e8">38</div>
<div class="a" style="left:0;top:545.35px;width:10px;height:1px;background:#3a3a3a"></div>
<div class="t" style="left:-17.8px;width:40px;text-align:center;top:537.00px;font-size:8.3px;font-weight:bold;color:#e8e8e8">39</div>
<div class="a" style="left:425px;top:133.05px;width:308px;height:1px;background:#dadada"></div>
<div class="a" style="left:425px;top:143.90px;width:308px;height:1px;background:#dadada"></div>
<div class="a" style="left:425px;top:154.75px;width:308px;height:1px;background:#dadada"></div>
<div class="a" style="left:425px;top:165.60px;width:308px;height:1px;background:#dadada"></div>
<div class="a" style="left:425px;top:176.45px;width:308px;height:1px;background:#dadada"></div>
<div class="a" style="left:425px;top:187.30px;width:308px;height:1px;background:#dadada"></div>
<div class="a" style="left:425px;top:198.15px;width:308px;height:1px;background:#dadada"></div>
<div class="a" style="left:425px;top:209.00px;width:308px;height:1px;background:#dadada"></div>
<div class="a" style="left:425px;top:219.85px;width:308px;height:1px;background:#dadada"></div>
<div class="a" style="left:425px;top:230.70px;width:308px;height:1px;background:#dadada"></div>
<div class="a" style="left:425px;top:241.55px;width:308px;height:1px;background:#dadada"></div>
<div class="a" style="left:425px;top:252.40px;width:308px;height:1px;background:#dadada"></div>
<div class="a" style="left:425px;top:263.25px;width:308px;height:1px;background:#dadada"></div>
<div class="a" style="left:425px;top:274.10px;width:308px;height:1px;background:#dadada"></div>
<div class="a" style="left:425px;top:284.95px;width:308px;height:1px;background:#dadada"></div>
<div class="a" style="left:425px;top:295.80px;width:308px;height:1px;background:#dadada"></div>
<div class="a" style="left:425px;top:306.65px;width:308px;height:1px;background:#dadada"></div>
<div class="a" style="left:425px;top:317.50px;width:308px;height:1px;background:#dadada"></div>
<div class="a" style="left:425px;top:328.35px;width:308px;height:1px;background:#dadada"></div>
<div class="a" style="left:425px;top:339.20px;width:308px;height:1px;background:#dadada"></div>
<div class="a" style="left:425px;top:350.05px;width:308px;height:1px;background:#dadada"></div>
<div class="a" style="left:425px;top:360.90px;width:308px;height:1px;background:#dadada"></div>
<div class="a" style="left:425px;top:371.75px;width:308px;height:1px;background:#dadada"></div>
<div class="a" style="left:425px;top:382.60px;width:308px;height:1px;background:#dadada"></div>
<div class="a" style="left:425px;top:393.45px;width:308px;height:1px;background:#dadada"></div>
<div class="a" style="left:425px;top:404.30px;width:308px;height:1px;background:#dadada"></div>
<div class="a" style="left:425px;top:415.15px;width:308px;height:1px;background:#dadada"></div>
<div class="a" style="left:425px;top:426.00px;width:308px;height:1px;background:#dadada"></div>
<div class="a" style="left:425px;top:436.85px;width:308px;height:1px;background:#dadada"></div>
<div class="a" style="left:425px;top:447.70px;width:308px;height:1px;background:#dadada"></div>
<div class="a" style="left:425px;top:458.55px;width:308px;height:1px;background:#dadada"></div>
<div class="a" style="left:425px;top:469.40px;width:308px;height:1px;background:#dadada"></div>
<div class="a" style="left:425px;top:480.25px;width:308px;height:1px;background:#dadada"></div>
<div class="a" style="left:425px;top:491.10px;width:308px;height:1px;background:#dadada"></div>
<div class="a" style="left:425px;top:501.95px;width:308px;height:1px;background:#dadada"></div>
<div class="a" style="left:425px;top:512.80px;width:308px;height:1px;background:#dadada"></div>
<div class="a" style="left:425px;top:523.65px;width:308px;height:1px;background:#dadada"></div>
<div class="a" style="left:425px;top:534.50px;width:308px;height:1px;background:#dadada"></div>
<div class="a" style="left:425px;top:545.35px;width:308px;height:1px;background:#dadada"></div>
<div class="a" style="left:424.5px;top:122.7px;width:1px;height:421.3px;background:#dadada"></div>
<div class="a" style="left:468.5px;top:122.7px;width:1px;height:421.3px;background:#dadada"></div>
<div class="a" style="left:512.5px;top:122.7px;width:1px;height:421.3px;background:#dadada"></div>
<div class="a" style="left:556.5px;top:122.7px;width:1px;height:421.3px;background:#dadada"></div>
<div class="a" style="left:600.5px;top:122.7px;width:1px;height:421.3px;background:#dadada"></div>
<div class="a" style="left:644.5px;top:122.7px;width:1px;height:421.3px;background:#dadada"></div>
<div class="a" style="left:688.5px;top:122.7px;width:1px;height:421.3px;background:#dadada"></div>
<div class="a" style="left:185.6px;top:133.05px;width:240px;height:1px;background:#dadada"></div>
<div class="a" style="left:10px;top:143.90px;width:415px;height:1px;background:#dadada"></div>
<div class="a" style="left:185.1px;top:122.7px;width:1px;height:21.7px;background:#dadada"></div>
<div class="a" style="left:234.3px;top:122.7px;width:1px;height:21.7px;background:#dadada"></div>
<div class="a" style="left:274.4px;top:122.7px;width:1px;height:21.7px;background:#dadada"></div>
<div class="a" style="left:327.1px;top:122.7px;width:1px;height:21.7px;background:#dadada"></div>
<div class="a" style="left:376.3px;top:122.7px;width:1px;height:21.7px;background:#dadada"></div>
<div class="a" style="left:122.5px;top:133.55px;width:1px;height:10.85px;background:#dadada"></div>
<div class="a" style="left:10px;top:122.7px;width:175.6px;height:10.85px;background:#dce6f2"></div>
<div class="a" style="left:10px;top:133.25px;width:175.6px;height:1px;background:#a6bcdc"></div>
<div class="a" style="left:10px;top:144.4px;width:415px;height:21.7px;background:#dce6f2"></div>
<div class="a" style="left:10px;top:165.80px;width:415px;height:1px;background:#a6bcdc"></div>
<div class="a" style="left:10px;top:176.75px;width:415px;height:1px;background:#c5d4ea"></div>
<div class="a" style="left:10px;top:296.10px;width:415px;height:1px;background:#c5d4ea"></div>
<div class="a" style="left:10px;top:502.25px;width:415px;height:1px;background:#c5d4ea"></div>
<div class="a" style="left:10px;top:122.7px;width:1px;height:421.3px;background:#cfcfcf"></div>
<div class="t" style="left:11.5px;top:125.60px;font-size:8.0px;font-weight:normal;color:#111;transform:scaleX(0.91);transform-origin:0 0">Year</div>
<div class="t" style="left:124.5px;top:125.60px;font-size:8.0px;font-weight:normal;color:#111;transform:scaleX(1.0);transform-origin:0 0">(All)</div>
<div class="a" style="left:175.1px;top:123.50px;width:9.5px;height:9px;background:#fbfbfb;border:1px solid #9a9a9a"></div>
<svg class="a" style="left:177.29999999999998px;top:126.70px;width:5px;height:3px" viewBox="0 0 5 3"><path d="M0 0h5L2.5 3z" fill="#6a6a6a"/></svg>
<div class="t" style="left:11.5px;top:147.30px;font-size:8.0px;font-weight:bold;color:#111;transform:scaleX(0.881);transform-origin:0 0">Sum of Amount</div>
<div class="t" style="left:124.5px;top:147.30px;font-size:8.0px;font-weight:bold;color:#111;transform:scaleX(0.829);transform-origin:0 0">Column Labels</div>
<div class="a" style="left:175.1px;top:145.20px;width:9.5px;height:9px;background:#fbfbfb;border:1px solid #9a9a9a"></div>
<svg class="a" style="left:177.29999999999998px;top:148.40px;width:5px;height:3px" viewBox="0 0 5 3"><path d="M0 0h5L2.5 3z" fill="#6a6a6a"/></svg>
<div class="t" style="left:11.5px;top:158.15px;font-size:8.0px;font-weight:bold;color:#111;transform:scaleX(0.851);transform-origin:0 0">Row Labels</div>
<div class="a" style="left:112.3px;top:156.05px;width:9.5px;height:9px;background:#fbfbfb;border:1px solid #9a9a9a"></div>
<svg class="a" style="left:114.5px;top:159.25px;width:5px;height:3px" viewBox="0 0 5 3"><path d="M0 0h5L2.5 3z" fill="#6a6a6a"/></svg>
<div class="t" style="right:760.90px;top:158.15px;font-size:8.0px;font-weight:bold;color:#111;transform:scaleX(.925);transform-origin:100% 0">5</div>
<div class="t" style="right:711.70px;top:158.15px;font-size:8.0px;font-weight:bold;color:#111;transform:scaleX(.925);transform-origin:100% 0">6</div>
<div class="t" style="right:671.60px;top:158.15px;font-size:8.0px;font-weight:bold;color:#111;transform:scaleX(.925);transform-origin:100% 0">7</div>
<div class="t" style="right:618.90px;top:158.15px;font-size:8.0px;font-weight:bold;color:#111;transform:scaleX(.925);transform-origin:100% 0">8</div>
<div class="t" style="right:569.70px;top:158.15px;font-size:8.0px;font-weight:bold;color:#111;transform:scaleX(.925);transform-origin:100% 0">9</div>
<div class="t" style="right:526.50px;top:158.15px;font-size:8.0px;font-weight:bold;color:#111;transform:scaleX(.886);transform-origin:100% 0">Grand Total</div>
<svg class="a" style="left:12.85px;top:168.60px;width:6.5px;height:6.5px" viewBox="0 0 6.5 6.5"><rect x=".5" y=".5" width="5.5" height="5.5" rx="1" fill="#dde5ef" stroke="#b4c1d5" stroke-width="1"/><path d="M1.5 3.25h3.5" stroke="#4a5a75" stroke-width="1"/></svg>
<div class="t" style="left:20.6px;top:169.00px;font-size:8.0px;font-weight:bold;color:#111;transform:scaleX(0.91);transform-origin:0 0">0</div>
<div class="t" style="right:711.80px;top:169.00px;font-size:8.0px;font-weight:bold;color:#111;transform:scaleX(.925);transform-origin:100% 0">-5000</div>
<div class="t" style="right:671.70px;top:169.00px;font-size:8.0px;font-weight:bold;color:#111;transform:scaleX(.925);transform-origin:100% 0">-9009,52</div>
<div class="t" style="right:619.00px;top:169.00px;font-size:8.0px;font-weight:bold;color:#111;transform:scaleX(.925);transform-origin:100% 0">-27534,52</div>
<div class="t" style="right:569.80px;top:169.00px;font-size:8.0px;font-weight:bold;color:#111;transform:scaleX(.925);transform-origin:100% 0">-69,75</div>
<div class="t" style="right:521.60px;top:169.00px;font-size:8.0px;font-weight:bold;color:#111;transform:scaleX(.925);transform-origin:100% 0">-41613,79</div>
<svg class="a" style="left:21.45px;top:179.45px;width:6.5px;height:6.5px" viewBox="0 0 6.5 6.5"><rect x=".5" y=".5" width="5.5" height="5.5" rx="1" fill="#dde5ef" stroke="#b4c1d5" stroke-width="1"/><path d="M1.5 3.25h3.5" stroke="#4a5a75" stroke-width="1"/></svg>
<div class="t" style="left:29.2px;top:179.85px;font-size:8.0px;font-weight:bold;color:#111;transform:scaleX(0.91);transform-origin:0 0">0010</div>
<div class="t" style="right:671.70px;top:179.85px;font-size:8.0px;font-weight:bold;color:#111;transform:scaleX(.925);transform-origin:100% 0">152071,2</div>
<div class="t" style="right:569.80px;top:179.85px;font-size:8.0px;font-weight:bold;color:#111;transform:scaleX(.925);transform-origin:100% 0">62500</div>
<div class="t" style="right:521.60px;top:179.85px;font-size:8.0px;font-weight:bold;color:#111;transform:scaleX(.925);transform-origin:100% 0">214571,2</div>
<div class="t" style="left:37.8px;top:190.70px;font-size:8.0px;font-weight:normal;color:#111;transform:scaleX(0.96);transform-origin:0 0">Goodwill</div>
<div class="t" style="right:671.70px;top:190.70px;font-size:8.0px;font-weight:normal;color:#111;transform:scaleX(.925);transform-origin:100% 0">152071,2</div>
<div class="t" style="right:569.80px;top:190.70px;font-size:8.0px;font-weight:normal;color:#111;transform:scaleX(.925);transform-origin:100% 0">62500</div>
<div class="t" style="right:521.60px;top:190.70px;font-size:8.0px;font-weight:normal;color:#111;transform:scaleX(.925);transform-origin:100% 0">214571,2</div>
<svg class="a" style="left:21.45px;top:201.15px;width:6.5px;height:6.5px" viewBox="0 0 6.5 6.5"><rect x=".5" y=".5" width="5.5" height="5.5" rx="1" fill="#dde5ef" stroke="#b4c1d5" stroke-width="1"/><path d="M1.5 3.25h3.5" stroke="#4a5a75" stroke-width="1"/></svg>
<div class="t" style="left:29.2px;top:201.55px;font-size:8.0px;font-weight:bold;color:#111;transform:scaleX(0.91);transform-origin:0 0">0015</div>
<div class="t" style="right:671.70px;top:201.55px;font-size:8.0px;font-weight:bold;color:#111;transform:scaleX(.925);transform-origin:100% 0">-2534,52</div>
<div class="t" style="right:619.00px;top:201.55px;font-size:8.0px;font-weight:bold;color:#111;transform:scaleX(.925);transform-origin:100% 0">-2534,52</div>
<div class="t" style="right:521.60px;top:201.55px;font-size:8.0px;font-weight:bold;color:#111;transform:scaleX(.925);transform-origin:100% 0">-5069,04</div>
<div class="t" style="left:37.8px;top:212.40px;font-size:8.0px;font-weight:normal;color:#111;transform:scaleX(0.96);transform-origin:0 0">Afschrijving goodwill</div>
<div class="t" style="right:671.70px;top:212.40px;font-size:8.0px;font-weight:normal;color:#111;transform:scaleX(.925);transform-origin:100% 0">-2534,52</div>
<div class="t" style="right:619.00px;top:212.40px;font-size:8.0px;font-weight:normal;color:#111;transform:scaleX(.925);transform-origin:100% 0">-2534,52</div>
<div class="t" style="right:521.60px;top:212.40px;font-size:8.0px;font-weight:normal;color:#111;transform:scaleX(.925);transform-origin:100% 0">-5069,04</div>
<svg class="a" style="left:21.45px;top:222.85px;width:6.5px;height:6.5px" viewBox="0 0 6.5 6.5"><rect x=".5" y=".5" width="5.5" height="5.5" rx="1" fill="#dde5ef" stroke="#b4c1d5" stroke-width="1"/><path d="M1.5 3.25h3.5" stroke="#4a5a75" stroke-width="1"/></svg>
<div class="t" style="left:29.2px;top:223.25px;font-size:8.0px;font-weight:bold;color:#111;transform:scaleX(0.91);transform-origin:0 0">0610</div>
<div class="t" style="right:711.80px;top:223.25px;font-size:8.0px;font-weight:bold;color:#111;transform:scaleX(.925);transform-origin:100% 0">-5000</div>
<div class="t" style="right:671.70px;top:223.25px;font-size:8.0px;font-weight:bold;color:#111;transform:scaleX(.925);transform-origin:100% 0">-5000</div>
<div class="t" style="right:521.60px;top:223.25px;font-size:8.0px;font-weight:bold;color:#111;transform:scaleX(.925);transform-origin:100% 0">-10000</div>
<div class="t" style="left:37.8px;top:234.10px;font-size:8.0px;font-weight:normal;color:#111;transform:scaleX(0.96);transform-origin:0 0">Aandelenkapitaal</div>
<div class="t" style="right:711.80px;top:234.10px;font-size:8.0px;font-weight:normal;color:#111;transform:scaleX(.925);transform-origin:100% 0">-5000</div>
<div class="t" style="right:671.70px;top:234.10px;font-size:8.0px;font-weight:normal;color:#111;transform:scaleX(.925);transform-origin:100% 0">-5000</div>
<div class="t" style="right:521.60px;top:234.10px;font-size:8.0px;font-weight:normal;color:#111;transform:scaleX(.925);transform-origin:100% 0">-10000</div>
<svg class="a" style="left:21.45px;top:244.55px;width:6.5px;height:6.5px" viewBox="0 0 6.5 6.5"><rect x=".5" y=".5" width="5.5" height="5.5" rx="1" fill="#dde5ef" stroke="#b4c1d5" stroke-width="1"/><path d="M1.5 3.25h3.5" stroke="#4a5a75" stroke-width="1"/><path d="M3.25 1.5v3.5" stroke="#4a5a75" stroke-width="1"/></svg>
<div class="t" style="left:29.2px;top:244.95px;font-size:8.0px;font-weight:bold;color:#111;transform:scaleX(0.91);transform-origin:0 0">0710</div>
<div class="t" style="right:671.70px;top:244.95px;font-size:8.0px;font-weight:bold;color:#111;transform:scaleX(.925);transform-origin:100% 0">-84735</div>
<div class="t" style="right:619.00px;top:244.95px;font-size:8.0px;font-weight:bold;color:#111;transform:scaleX(.925);transform-origin:100% 0">-12500</div>
<div class="t" style="right:521.60px;top:244.95px;font-size:8.0px;font-weight:bold;color:#111;transform:scaleX(.925);transform-origin:100% 0">-97235</div>
<svg class="a" style="left:21.45px;top:255.40px;width:6.5px;height:6.5px" viewBox="0 0 6.5 6.5"><rect x=".5" y=".5" width="5.5" height="5.5" rx="1" fill="#dde5ef" stroke="#b4c1d5" stroke-width="1"/><path d="M1.5 3.25h3.5" stroke="#4a5a75" stroke-width="1"/><path d="M3.25 1.5v3.5" stroke="#4a5a75" stroke-width="1"/></svg>
<div class="t" style="left:29.2px;top:255.80px;font-size:8.0px;font-weight:bold;color:#111;transform:scaleX(0.91);transform-origin:0 0">0720</div>
<div class="t" style="right:569.80px;top:255.80px;font-size:8.0px;font-weight:bold;color:#111;transform:scaleX(.925);transform-origin:100% 0">-62500</div>
<div class="t" style="right:521.60px;top:255.80px;font-size:8.0px;font-weight:bold;color:#111;transform:scaleX(.925);transform-origin:100% 0">-62500</div>
<svg class="a" style="left:21.45px;top:266.25px;width:6.5px;height:6.5px" viewBox="0 0 6.5 6.5"><rect x=".5" y=".5" width="5.5" height="5.5" rx="1" fill="#dde5ef" stroke="#b4c1d5" stroke-width="1"/><path d="M1.5 3.25h3.5" stroke="#4a5a75" stroke-width="1"/><path d="M3.25 1.5v3.5" stroke="#4a5a75" stroke-width="1"/></svg>
<div class="t" style="left:29.2px;top:266.65px;font-size:8.0px;font-weight:bold;color:#111;transform:scaleX(0.91);transform-origin:0 0">0721</div>
<div class="t" style="right:569.80px;top:266.65px;font-size:8.0px;font-weight:bold;color:#111;transform:scaleX(.925);transform-origin:100% 0">-69,75</div>
<div class="t" style="right:521.60px;top:266.65px;font-size:8.0px;font-weight:bold;color:#111;transform:scaleX(.925);transform-origin:100% 0">-69,75</div>
<svg class="a" style="left:21.45px;top:277.10px;width:6.5px;height:6.5px" viewBox="0 0 6.5 6.5"><rect x=".5" y=".5" width="5.5" height="5.5" rx="1" fill="#dde5ef" stroke="#b4c1d5" stroke-width="1"/><path d="M1.5 3.25h3.5" stroke="#4a5a75" stroke-width="1"/><path d="M3.25 1.5v3.5" stroke="#4a5a75" stroke-width="1"/></svg>
<div class="t" style="left:29.2px;top:277.50px;font-size:8.0px;font-weight:bold;color:#111;transform:scaleX(0.91);transform-origin:0 0">0730</div>
<div class="t" style="right:671.70px;top:277.50px;font-size:8.0px;font-weight:bold;color:#111;transform:scaleX(.925);transform-origin:100% 0">-68811,2</div>
<div class="t" style="right:619.00px;top:277.50px;font-size:8.0px;font-weight:bold;color:#111;transform:scaleX(.925);transform-origin:100% 0">-12500</div>
<div class="t" style="right:521.60px;top:277.50px;font-size:8.0px;font-weight:bold;color:#111;transform:scaleX(.925);transform-origin:100% 0">-81311,2</div>
<svg class="a" style="left:12.85px;top:287.95px;width:6.5px;height:6.5px" viewBox="0 0 6.5 6.5"><rect x=".5" y=".5" width="5.5" height="5.5" rx="1" fill="#dde5ef" stroke="#b4c1d5" stroke-width="1"/><path d="M1.5 3.25h3.5" stroke="#4a5a75" stroke-width="1"/></svg>
<div class="t" style="left:20.6px;top:288.35px;font-size:8.0px;font-weight:bold;color:#111;transform:scaleX(0.91);transform-origin:0 0">1</div>
<div class="t" style="right:761.00px;top:288.35px;font-size:8.0px;font-weight:bold;color:#111;transform:scaleX(.925);transform-origin:100% 0">-325</div>
<div class="t" style="right:711.80px;top:288.35px;font-size:8.0px;font-weight:bold;color:#111;transform:scaleX(.925);transform-origin:100% 0">4951,88</div>
<div class="t" style="right:671.70px;top:288.35px;font-size:8.0px;font-weight:bold;color:#111;transform:scaleX(.925);transform-origin:100% 0">17814,2</div>
<div class="t" style="right:619.00px;top:288.35px;font-size:8.0px;font-weight:bold;color:#111;transform:scaleX(.925);transform-origin:100% 0">8262,5</div>
<div class="t" style="right:569.80px;top:288.35px;font-size:8.0px;font-weight:bold;color:#111;transform:scaleX(.925);transform-origin:100% 0">12665,8</div>
<div class="t" style="right:521.60px;top:288.35px;font-size:8.0px;font-weight:bold;color:#111;transform:scaleX(.925);transform-origin:100% 0">43369,38</div>
<svg class="a" style="left:21.45px;top:298.80px;width:6.5px;height:6.5px" viewBox="0 0 6.5 6.5"><rect x=".5" y=".5" width="5.5" height="5.5" rx="1" fill="#dde5ef" stroke="#b4c1d5" stroke-width="1"/><path d="M1.5 3.25h3.5" stroke="#4a5a75" stroke-width="1"/></svg>
<div class="t" style="left:29.2px;top:299.20px;font-size:8.0px;font-weight:bold;color:#111;transform:scaleX(0.91);transform-origin:0 0">1015</div>
<div class="t" style="right:711.80px;top:299.20px;font-size:8.0px;font-weight:bold;color:#111;transform:scaleX(.925);transform-origin:100% 0">4872,55</div>
<div class="t" style="right:671.70px;top:299.20px;font-size:8.0px;font-weight:bold;color:#111;transform:scaleX(.925);transform-origin:100% 0">4483,78</div>
<div class="t" style="right:619.00px;top:299.20px;font-size:8.0px;font-weight:bold;color:#111;transform:scaleX(.925);transform-origin:100% 0">-5521,6</div>
<div class="t" style="right:569.80px;top:299.20px;font-size:8.0px;font-weight:bold;color:#111;transform:scaleX(.925);transform-origin:100% 0">3832,66</div>
<div class="t" style="right:521.60px;top:299.20px;font-size:8.0px;font-weight:bold;color:#111;transform:scaleX(.925);transform-origin:100% 0">7667,39</div>
<div class="t" style="left:37.8px;top:310.05px;font-size:8.0px;font-weight:normal;color:#111;transform:scaleX(0.96);transform-origin:0 0">RABO 740</div>
<div class="t" style="right:711.80px;top:310.05px;font-size:8.0px;font-weight:normal;color:#111;transform:scaleX(.925);transform-origin:100% 0">4872,55</div>
<div class="t" style="right:671.70px;top:310.05px;font-size:8.0px;font-weight:normal;color:#111;transform:scaleX(.925);transform-origin:100% 0">4483,78</div>
<div class="t" style="right:619.00px;top:310.05px;font-size:8.0px;font-weight:normal;color:#111;transform:scaleX(.925);transform-origin:100% 0">-5521,6</div>
<div class="t" style="right:569.80px;top:310.05px;font-size:8.0px;font-weight:normal;color:#111;transform:scaleX(.925);transform-origin:100% 0">3832,66</div>
<div class="t" style="right:521.60px;top:310.05px;font-size:8.0px;font-weight:normal;color:#111;transform:scaleX(.925);transform-origin:100% 0">7667,39</div>
<svg class="a" style="left:21.45px;top:320.50px;width:6.5px;height:6.5px" viewBox="0 0 6.5 6.5"><rect x=".5" y=".5" width="5.5" height="5.5" rx="1" fill="#dde5ef" stroke="#b4c1d5" stroke-width="1"/><path d="M1.5 3.25h3.5" stroke="#4a5a75" stroke-width="1"/></svg>
<div class="t" style="left:29.2px;top:320.90px;font-size:8.0px;font-weight:bold;color:#111;transform:scaleX(0.91);transform-origin:0 0">1310</div>
<div class="t" style="right:671.70px;top:320.90px;font-size:8.0px;font-weight:bold;color:#111;transform:scaleX(.925);transform-origin:100% 0">20418,75</div>
<div class="t" style="right:619.00px;top:320.90px;font-size:8.0px;font-weight:bold;color:#111;transform:scaleX(.925);transform-origin:100% 0">34294,64</div>
<div class="t" style="right:569.80px;top:320.90px;font-size:8.0px;font-weight:bold;color:#111;transform:scaleX(.925);transform-origin:100% 0">-12154,03</div>
<div class="t" style="right:521.60px;top:320.90px;font-size:8.0px;font-weight:bold;color:#111;transform:scaleX(.925);transform-origin:100% 0">42559,36</div>
<div class="t" style="left:37.8px;top:331.75px;font-size:8.0px;font-weight:normal;color:#111;transform:scaleX(0.96);transform-origin:0 0">Debiteuren</div>
<div class="t" style="right:671.70px;top:331.75px;font-size:8.0px;font-weight:normal;color:#111;transform:scaleX(.925);transform-origin:100% 0">20418,75</div>
<div class="t" style="right:619.00px;top:331.75px;font-size:8.0px;font-weight:normal;color:#111;transform:scaleX(.925);transform-origin:100% 0">34294,64</div>
<div class="t" style="right:569.80px;top:331.75px;font-size:8.0px;font-weight:normal;color:#111;transform:scaleX(.925);transform-origin:100% 0">-12154,03</div>
<div class="t" style="right:521.60px;top:331.75px;font-size:8.0px;font-weight:normal;color:#111;transform:scaleX(.925);transform-origin:100% 0">42559,36</div>
<svg class="a" style="left:21.45px;top:342.20px;width:6.5px;height:6.5px" viewBox="0 0 6.5 6.5"><rect x=".5" y=".5" width="5.5" height="5.5" rx="1" fill="#dde5ef" stroke="#b4c1d5" stroke-width="1"/><path d="M1.5 3.25h3.5" stroke="#4a5a75" stroke-width="1"/></svg>
<div class="t" style="left:29.2px;top:342.60px;font-size:8.0px;font-weight:bold;color:#111;transform:scaleX(0.91);transform-origin:0 0">1400</div>
<div class="t" style="right:671.70px;top:342.60px;font-size:8.0px;font-weight:bold;color:#111;transform:scaleX(.925);transform-origin:100% 0">3998</div>
<div class="t" style="right:619.00px;top:342.60px;font-size:8.0px;font-weight:bold;color:#111;transform:scaleX(.925);transform-origin:100% 0">100</div>
<div class="t" style="right:569.80px;top:342.60px;font-size:8.0px;font-weight:bold;color:#111;transform:scaleX(.925);transform-origin:100% 0">1524,6</div>
<div class="t" style="right:521.60px;top:342.60px;font-size:8.0px;font-weight:bold;color:#111;transform:scaleX(.925);transform-origin:100% 0">5622,6</div>
<div class="t" style="left:37.8px;top:353.45px;font-size:8.0px;font-weight:normal;color:#111;transform:scaleX(0.96);transform-origin:0 0">Vooruitbetaalde kosten</div>
<div class="t" style="right:671.70px;top:353.45px;font-size:8.0px;font-weight:normal;color:#111;transform:scaleX(.925);transform-origin:100% 0">3998</div>
<div class="t" style="right:619.00px;top:353.45px;font-size:8.0px;font-weight:normal;color:#111;transform:scaleX(.925);transform-origin:100% 0">100</div>
<div class="t" style="right:569.80px;top:353.45px;font-size:8.0px;font-weight:normal;color:#111;transform:scaleX(.925);transform-origin:100% 0">1524,6</div>
<div class="t" style="right:521.60px;top:353.45px;font-size:8.0px;font-weight:normal;color:#111;transform:scaleX(.925);transform-origin:100% 0">5622,6</div>
<svg class="a" style="left:21.45px;top:363.90px;width:6.5px;height:6.5px" viewBox="0 0 6.5 6.5"><rect x=".5" y=".5" width="5.5" height="5.5" rx="1" fill="#dde5ef" stroke="#b4c1d5" stroke-width="1"/><path d="M1.5 3.25h3.5" stroke="#4a5a75" stroke-width="1"/></svg>
<div class="t" style="left:29.2px;top:364.30px;font-size:8.0px;font-weight:bold;color:#111;transform:scaleX(0.91);transform-origin:0 0">1510</div>
<div class="t" style="right:671.70px;top:364.30px;font-size:8.0px;font-weight:bold;color:#111;transform:scaleX(.925);transform-origin:100% 0">-4206,26</div>
<div class="t" style="right:619.00px;top:364.30px;font-size:8.0px;font-weight:bold;color:#111;transform:scaleX(.925);transform-origin:100% 0">-6481,3</div>
<div class="t" style="right:569.80px;top:364.30px;font-size:8.0px;font-weight:bold;color:#111;transform:scaleX(.925);transform-origin:100% 0">-2663,62</div>
<div class="t" style="right:521.60px;top:364.30px;font-size:8.0px;font-weight:bold;color:#111;transform:scaleX(.925);transform-origin:100% 0">-13351,18</div>
<div class="t" style="left:37.8px;top:375.15px;font-size:8.0px;font-weight:normal;color:#111;transform:scaleX(0.96);transform-origin:0 0">Af te dragen BTW hoog</div>
<div class="t" style="right:671.70px;top:375.15px;font-size:8.0px;font-weight:normal;color:#111;transform:scaleX(.925);transform-origin:100% 0">-4206,26</div>
<div class="t" style="right:619.00px;top:375.15px;font-size:8.0px;font-weight:normal;color:#111;transform:scaleX(.925);transform-origin:100% 0">-6481,3</div>
<div class="t" style="right:569.80px;top:375.15px;font-size:8.0px;font-weight:normal;color:#111;transform:scaleX(.925);transform-origin:100% 0">-2663,62</div>
<div class="t" style="right:521.60px;top:375.15px;font-size:8.0px;font-weight:normal;color:#111;transform:scaleX(.925);transform-origin:100% 0">-13351,18</div>
<svg class="a" style="left:21.45px;top:385.60px;width:6.5px;height:6.5px" viewBox="0 0 6.5 6.5"><rect x=".5" y=".5" width="5.5" height="5.5" rx="1" fill="#dde5ef" stroke="#b4c1d5" stroke-width="1"/><path d="M1.5 3.25h3.5" stroke="#4a5a75" stroke-width="1"/></svg>
<div class="t" style="left:29.2px;top:386.00px;font-size:8.0px;font-weight:bold;color:#111;transform:scaleX(0.91);transform-origin:0 0">1530</div>
<div class="t" style="right:761.00px;top:386.00px;font-size:8.0px;font-weight:bold;color:#111;transform:scaleX(.925);transform-origin:100% 0">52,5</div>
<div class="t" style="right:671.70px;top:386.00px;font-size:8.0px;font-weight:bold;color:#111;transform:scaleX(.925);transform-origin:100% 0">4070,5</div>
<div class="t" style="right:619.00px;top:386.00px;font-size:8.0px;font-weight:bold;color:#111;transform:scaleX(.925);transform-origin:100% 0">4773,98</div>
<div class="t" style="right:569.80px;top:386.00px;font-size:8.0px;font-weight:bold;color:#111;transform:scaleX(.925);transform-origin:100% 0">83,66</div>
<div class="t" style="right:521.60px;top:386.00px;font-size:8.0px;font-weight:bold;color:#111;transform:scaleX(.925);transform-origin:100% 0">8980,64</div>
<div class="t" style="left:37.8px;top:396.85px;font-size:8.0px;font-weight:normal;color:#111;transform:scaleX(0.96);transform-origin:0 0">Te vorderen BTW Hoog</div>
<div class="t" style="right:761.00px;top:396.85px;font-size:8.0px;font-weight:normal;color:#111;transform:scaleX(.925);transform-origin:100% 0">52,5</div>
<div class="t" style="right:671.70px;top:396.85px;font-size:8.0px;font-weight:normal;color:#111;transform:scaleX(.925);transform-origin:100% 0">4070,5</div>
<div class="t" style="right:619.00px;top:396.85px;font-size:8.0px;font-weight:normal;color:#111;transform:scaleX(.925);transform-origin:100% 0">4773,98</div>
<div class="t" style="right:569.80px;top:396.85px;font-size:8.0px;font-weight:normal;color:#111;transform:scaleX(.925);transform-origin:100% 0">83,66</div>
<div class="t" style="right:521.60px;top:396.85px;font-size:8.0px;font-weight:normal;color:#111;transform:scaleX(.925);transform-origin:100% 0">8980,64</div>
<svg class="a" style="left:21.45px;top:407.30px;width:6.5px;height:6.5px" viewBox="0 0 6.5 6.5"><rect x=".5" y=".5" width="5.5" height="5.5" rx="1" fill="#dde5ef" stroke="#b4c1d5" stroke-width="1"/><path d="M1.5 3.25h3.5" stroke="#4a5a75" stroke-width="1"/></svg>
<div class="t" style="left:29.2px;top:407.70px;font-size:8.0px;font-weight:bold;color:#111;transform:scaleX(0.91);transform-origin:0 0">1540</div>
<div class="t" style="right:711.80px;top:407.70px;font-size:8.0px;font-weight:bold;color:#111;transform:scaleX(.925);transform-origin:100% 0">4,33</div>
<div class="t" style="right:619.00px;top:407.70px;font-size:8.0px;font-weight:bold;color:#111;transform:scaleX(.925);transform-origin:100% 0">6,17</div>
<div class="t" style="right:569.80px;top:407.70px;font-size:8.0px;font-weight:bold;color:#111;transform:scaleX(.925);transform-origin:100% 0">5,54</div>
<div class="t" style="right:521.60px;top:407.70px;font-size:8.0px;font-weight:bold;color:#111;transform:scaleX(.925);transform-origin:100% 0">16,04</div>
<div class="t" style="left:37.8px;top:418.55px;font-size:8.0px;font-weight:normal;color:#111;transform:scaleX(0.96);transform-origin:0 0">Te vorderen BTW Laag</div>
<div class="t" style="right:711.80px;top:418.55px;font-size:8.0px;font-weight:normal;color:#111;transform:scaleX(.925);transform-origin:100% 0">4,33</div>
<div class="t" style="right:619.00px;top:418.55px;font-size:8.0px;font-weight:normal;color:#111;transform:scaleX(.925);transform-origin:100% 0">6,17</div>
<div class="t" style="right:569.80px;top:418.55px;font-size:8.0px;font-weight:normal;color:#111;transform:scaleX(.925);transform-origin:100% 0">5,54</div>
<div class="t" style="right:521.60px;top:418.55px;font-size:8.0px;font-weight:normal;color:#111;transform:scaleX(.925);transform-origin:100% 0">16,04</div>
<svg class="a" style="left:21.45px;top:429.00px;width:6.5px;height:6.5px" viewBox="0 0 6.5 6.5"><rect x=".5" y=".5" width="5.5" height="5.5" rx="1" fill="#dde5ef" stroke="#b4c1d5" stroke-width="1"/><path d="M1.5 3.25h3.5" stroke="#4a5a75" stroke-width="1"/></svg>
<div class="t" style="left:29.2px;top:429.40px;font-size:8.0px;font-weight:bold;color:#111;transform:scaleX(0.91);transform-origin:0 0">1550</div>
<div class="t" style="right:761.00px;top:429.40px;font-size:8.0px;font-weight:bold;color:#111;transform:scaleX(.925);transform-origin:100% 0">0</div>
<div class="t" style="right:671.70px;top:429.40px;font-size:8.0px;font-weight:bold;color:#111;transform:scaleX(.925);transform-origin:100% 0">0</div>
<div class="t" style="right:619.00px;top:429.40px;font-size:8.0px;font-weight:bold;color:#111;transform:scaleX(.925);transform-origin:100% 0">0</div>
<div class="t" style="right:569.80px;top:429.40px;font-size:8.0px;font-weight:bold;color:#111;transform:scaleX(.925);transform-origin:100% 0">0</div>
<div class="t" style="right:521.60px;top:429.40px;font-size:8.0px;font-weight:bold;color:#111;transform:scaleX(.925);transform-origin:100% 0">0</div>
<div class="t" style="left:37.8px;top:440.25px;font-size:8.0px;font-weight:normal;color:#111;transform:scaleX(0.96);transform-origin:0 0">BTW - Verlegd</div>
<div class="t" style="right:761.00px;top:440.25px;font-size:8.0px;font-weight:normal;color:#111;transform:scaleX(.925);transform-origin:100% 0">0</div>
<div class="t" style="right:671.70px;top:440.25px;font-size:8.0px;font-weight:normal;color:#111;transform:scaleX(.925);transform-origin:100% 0">0</div>
<div class="t" style="right:619.00px;top:440.25px;font-size:8.0px;font-weight:normal;color:#111;transform:scaleX(.925);transform-origin:100% 0">0</div>
<div class="t" style="right:569.80px;top:440.25px;font-size:8.0px;font-weight:normal;color:#111;transform:scaleX(.925);transform-origin:100% 0">0</div>
<div class="t" style="right:521.60px;top:440.25px;font-size:8.0px;font-weight:normal;color:#111;transform:scaleX(.925);transform-origin:100% 0">0</div>
<svg class="a" style="left:21.45px;top:450.70px;width:6.5px;height:6.5px" viewBox="0 0 6.5 6.5"><rect x=".5" y=".5" width="5.5" height="5.5" rx="1" fill="#dde5ef" stroke="#b4c1d5" stroke-width="1"/><path d="M1.5 3.25h3.5" stroke="#4a5a75" stroke-width="1"/></svg>
<div class="t" style="left:29.2px;top:451.10px;font-size:8.0px;font-weight:bold;color:#111;transform:scaleX(0.91);transform-origin:0 0">1610</div>
<div class="t" style="right:761.00px;top:451.10px;font-size:8.0px;font-weight:bold;color:#111;transform:scaleX(.925);transform-origin:100% 0">-377,5</div>
<div class="t" style="right:711.80px;top:451.10px;font-size:8.0px;font-weight:bold;color:#111;transform:scaleX(.925);transform-origin:100% 0">75</div>
<div class="t" style="right:671.70px;top:451.10px;font-size:8.0px;font-weight:bold;color:#111;transform:scaleX(.925);transform-origin:100% 0">-14626,49</div>
<div class="t" style="right:619.00px;top:451.10px;font-size:8.0px;font-weight:bold;color:#111;transform:scaleX(.925);transform-origin:100% 0">-22585,31</div>
<div class="t" style="right:569.80px;top:451.10px;font-size:8.0px;font-weight:bold;color:#111;transform:scaleX(.925);transform-origin:100% 0">22036,99</div>
<div class="t" style="right:521.60px;top:451.10px;font-size:8.0px;font-weight:bold;color:#111;transform:scaleX(.925);transform-origin:100% 0">-15477,31</div>
<div class="t" style="left:37.8px;top:461.95px;font-size:8.0px;font-weight:normal;color:#111;transform:scaleX(0.96);transform-origin:0 0">Crediteuren</div>
<div class="t" style="right:761.00px;top:461.95px;font-size:8.0px;font-weight:normal;color:#111;transform:scaleX(.925);transform-origin:100% 0">-377,5</div>
<div class="t" style="right:711.80px;top:461.95px;font-size:8.0px;font-weight:normal;color:#111;transform:scaleX(.925);transform-origin:100% 0">75</div>
<div class="t" style="right:671.70px;top:461.95px;font-size:8.0px;font-weight:normal;color:#111;transform:scaleX(.925);transform-origin:100% 0">-14626,49</div>
<div class="t" style="right:619.00px;top:461.95px;font-size:8.0px;font-weight:normal;color:#111;transform:scaleX(.925);transform-origin:100% 0">-22585,31</div>
<div class="t" style="right:569.80px;top:461.95px;font-size:8.0px;font-weight:normal;color:#111;transform:scaleX(.925);transform-origin:100% 0">22036,99</div>
<div class="t" style="right:521.60px;top:461.95px;font-size:8.0px;font-weight:normal;color:#111;transform:scaleX(.925);transform-origin:100% 0">-15477,31</div>
<svg class="a" style="left:21.45px;top:472.40px;width:6.5px;height:6.5px" viewBox="0 0 6.5 6.5"><rect x=".5" y=".5" width="5.5" height="5.5" rx="1" fill="#dde5ef" stroke="#b4c1d5" stroke-width="1"/><path d="M1.5 3.25h3.5" stroke="#4a5a75" stroke-width="1"/></svg>
<div class="t" style="left:29.2px;top:472.80px;font-size:8.0px;font-weight:bold;color:#111;transform:scaleX(0.91);transform-origin:0 0">1790</div>
<div class="t" style="right:671.70px;top:472.80px;font-size:8.0px;font-weight:bold;color:#111;transform:scaleX(.925);transform-origin:100% 0">3675,92</div>
<div class="t" style="right:619.00px;top:472.80px;font-size:8.0px;font-weight:bold;color:#111;transform:scaleX(.925);transform-origin:100% 0">3675,92</div>
<div class="t" style="right:521.60px;top:472.80px;font-size:8.0px;font-weight:bold;color:#111;transform:scaleX(.925);transform-origin:100% 0">7351,84</div>
<div class="t" style="left:37.8px;top:483.65px;font-size:8.0px;font-weight:normal;color:#111;transform:scaleX(0.96);transform-origin:0 0">Te betalen netto loon</div>
<div class="t" style="right:671.70px;top:483.65px;font-size:8.0px;font-weight:normal;color:#111;transform:scaleX(.925);transform-origin:100% 0">3675,92</div>
<div class="t" style="right:619.00px;top:483.65px;font-size:8.0px;font-weight:normal;color:#111;transform:scaleX(.925);transform-origin:100% 0">3675,92</div>
<div class="t" style="right:521.60px;top:483.65px;font-size:8.0px;font-weight:normal;color:#111;transform:scaleX(.925);transform-origin:100% 0">7351,84</div>
<svg class="a" style="left:12.85px;top:494.10px;width:6.5px;height:6.5px" viewBox="0 0 6.5 6.5"><rect x=".5" y=".5" width="5.5" height="5.5" rx="1" fill="#dde5ef" stroke="#b4c1d5" stroke-width="1"/><path d="M1.5 3.25h3.5" stroke="#4a5a75" stroke-width="1"/></svg>
<div class="t" style="left:20.6px;top:494.50px;font-size:8.0px;font-weight:bold;color:#111;transform:scaleX(0.91);transform-origin:0 0">4</div>
<div class="t" style="right:761.00px;top:494.50px;font-size:8.0px;font-weight:bold;color:#111;transform:scaleX(.925);transform-origin:100% 0">325</div>
<div class="t" style="right:711.80px;top:494.50px;font-size:8.0px;font-weight:bold;color:#111;transform:scaleX(.925);transform-origin:100% 0">48,12</div>
<div class="t" style="right:671.70px;top:494.50px;font-size:8.0px;font-weight:bold;color:#111;transform:scaleX(.925);transform-origin:100% 0">15629,82</div>
<div class="t" style="right:619.00px;top:494.50px;font-size:8.0px;font-weight:bold;color:#111;transform:scaleX(.925);transform-origin:100% 0">32052,05</div>
<div class="t" style="right:569.80px;top:494.50px;font-size:8.0px;font-weight:bold;color:#111;transform:scaleX(.925);transform-origin:100% 0">279,85</div>
<div class="t" style="right:521.60px;top:494.50px;font-size:8.0px;font-weight:bold;color:#111;transform:scaleX(.925);transform-origin:100% 0">48334,84</div>
<svg class="a" style="left:21.45px;top:504.95px;width:6.5px;height:6.5px" viewBox="0 0 6.5 6.5"><rect x=".5" y=".5" width="5.5" height="5.5" rx="1" fill="#dde5ef" stroke="#b4c1d5" stroke-width="1"/><path d="M1.5 3.25h3.5" stroke="#4a5a75" stroke-width="1"/><path d="M3.25 1.5v3.5" stroke="#4a5a75" stroke-width="1"/></svg>
<div class="t" style="left:29.2px;top:505.35px;font-size:8.0px;font-weight:bold;color:#111;transform:scaleX(0.91);transform-origin:0 0">4045</div>
<div class="t" style="right:671.70px;top:505.35px;font-size:8.0px;font-weight:bold;color:#111;transform:scaleX(.925);transform-origin:100% 0">12500</div>
<div class="t" style="right:619.00px;top:505.35px;font-size:8.0px;font-weight:bold;color:#111;transform:scaleX(.925);transform-origin:100% 0">25000</div>
<div class="t" style="right:521.60px;top:505.35px;font-size:8.0px;font-weight:bold;color:#111;transform:scaleX(.925);transform-origin:100% 0">37500</div>
<svg class="a" style="left:21.45px;top:515.80px;width:6.5px;height:6.5px" viewBox="0 0 6.5 6.5"><rect x=".5" y=".5" width="5.5" height="5.5" rx="1" fill="#dde5ef" stroke="#b4c1d5" stroke-width="1"/><path d="M1.5 3.25h3.5" stroke="#4a5a75" stroke-width="1"/></svg>
<div class="t" style="left:29.2px;top:516.20px;font-size:8.0px;font-weight:bold;color:#111;transform:scaleX(0.91);transform-origin:0 0">4055</div>
<div class="t" style="right:671.70px;top:516.20px;font-size:8.0px;font-weight:bold;color:#111;transform:scaleX(.925);transform-origin:100% 0">187,3</div>
<div class="t" style="right:619.00px;top:516.20px;font-size:8.0px;font-weight:bold;color:#111;transform:scaleX(.925);transform-origin:100% 0">569,56</div>
<div class="t" style="right:569.80px;top:516.20px;font-size:8.0px;font-weight:bold;color:#111;transform:scaleX(.925);transform-origin:100% 0">74,38</div>
<div class="t" style="right:521.60px;top:516.20px;font-size:8.0px;font-weight:bold;color:#111;transform:scaleX(.925);transform-origin:100% 0">831,24</div>
<div class="t" style="left:37.8px;top:527.05px;font-size:8.0px;font-weight:normal;color:#111;transform:scaleX(0.96);transform-origin:0 0">Licentiekosten Software</div>
<div class="t" style="right:671.70px;top:527.05px;font-size:8.0px;font-weight:normal;color:#111;transform:scaleX(.925);transform-origin:100% 0">187,3</div>
<div class="t" style="right:619.00px;top:527.05px;font-size:8.0px;font-weight:normal;color:#111;transform:scaleX(.925);transform-origin:100% 0">569,56</div>
<div class="t" style="right:569.80px;top:527.05px;font-size:8.0px;font-weight:normal;color:#111;transform:scaleX(.925);transform-origin:100% 0">74,38</div>
<div class="t" style="right:521.60px;top:527.05px;font-size:8.0px;font-weight:normal;color:#111;transform:scaleX(.925);transform-origin:100% 0">831,24</div>
<svg class="a" style="left:21.45px;top:537.50px;width:6.5px;height:6.5px" viewBox="0 0 6.5 6.5"><rect x=".5" y=".5" width="5.5" height="5.5" rx="1" fill="#dde5ef" stroke="#b4c1d5" stroke-width="1"/><path d="M1.5 3.25h3.5" stroke="#4a5a75" stroke-width="1"/></svg>
<div class="t" style="left:29.2px;top:537.90px;font-size:8.0px;font-weight:bold;color:#111;transform:scaleX(0.91);transform-origin:0 0">4060</div>
<div class="t" style="right:569.80px;top:537.90px;font-size:8.0px;font-weight:bold;color:#111;transform:scaleX(.925);transform-origin:100% 0">52,92</div>
<div class="t" style="right:521.60px;top:537.90px;font-size:8.0px;font-weight:bold;color:#111;transform:scaleX(.925);transform-origin:100% 0">52,92</div>
<div class="a" style="left:9px;top:501.35px;width:114.8px;height:12.95px;border:1.5px solid #2a7d45"></div>
<div class="a" style="left:121.4px;top:511.90px;width:3.4px;height:3.4px;background:#237a3e"></div>
<div class="a" style="left:731.3px;top:108.1px;width:9.8px;height:463.19999999999993px;background:#282a2a"></div>
<div class="a" style="left:741.1px;top:108.1px;width:1.4px;height:463.19999999999993px;background:#1e1e1e"></div>
<div class="a" style="left:734px;top:110px;width:6.2px;height:200px;border-radius:3px;background:#6e7575"></div>
<div class="a" style="left:731.2px;top:107.6px;width:5px;height:3.2px;background:#e8e8e8"></div>
<div class="a" style="left:0;top:544.0px;width:728.6px;height:10px;background:#2a2a2a"></div>
<div class="a" style="left:0;top:544.0px;width:728.6px;height:.8px;background:#1a1a1a"></div>
<div class="a" style="left:728.6px;top:544.0px;width:2.7px;height:9.6px;background:#fff"></div>
<div class="a" style="left:-5px;top:547px;width:685px;height:5.2px;border-radius:3px;background:#5e5e5e"></div>
<div class="a" style="left:0;top:553.6px;width:741.1px;height:17.2px;background:#313131"></div>
<div class="a" style="left:0;top:553.6px;width:742px;height:.8px;background:#3c3c3c"></div>
<svg class="a" style="left:0;top:555px;width:34px;height:17px" viewBox="0 0 34 17"><path d="M9 4.5L4.8 8.5 9 12.5zM20.8 4.5L25 8.5l-4.2 4z" fill="#6a6a6a"/></svg>
<div class="a" style="left:35.8px;top:554.3px;width:53.3px;height:14.6px;border-radius:0 0 3px 3px;background:#ffffff"></div>
<div class="t" style="left:49.1px;top:559px;font-size:8.26px;color:#2e8b4e;font-weight:bold;-webkit-text-stroke:0.22px #2e8b4e;">Sheet2</div>
<div class="a" style="left:89.5px;top:553.8px;width:130.5px;height:17.5px;background:#222222"></div>
<div class="t" style="left:101.6px;top:559px;font-size:8.25px;color:#8c8c8c;font-weight:normal;-webkit-text-stroke:0.22px #8c8c8c;">GLTransClient</div>
<div class="sep" style="left:166.4px;top:555px;height:13px;background:#4a4a4a"></div>
<div class="t" style="left:179.4px;top:559px;font-size:8.25px;color:#8c8c8c;font-weight:normal;-webkit-text-stroke:0.22px #8c8c8c;">Sheet1</div>
<div class="sep" style="left:220px;top:555px;height:13px;background:#4a4a4a"></div>
<svg class="a" style="left:226px;top:556.5px;width:13px;height:13px" viewBox="0 0 13 13"><path d="M6.5 2v9M2 6.5h9" stroke="#dcdcdc" stroke-width="1.4"/></svg>
<div class="sep" style="left:245.7px;top:555px;height:13px;background:#4a4a4a"></div>
<div class="a" style="left:0;top:570.8px;width:945px;height:13.2px;background:#3b3b3b"></div>
<div class="t" style="left:11px;top:576.3px;font-size:8.1px;color:#d6d6d6;font-weight:normal;-webkit-text-stroke:0.22px #d6d6d6;">Ready</div>
<svg class="a" style="left:46px;top:572px;width:40px;height:12px" viewBox="46 572 40 12">
<g fill="none" stroke="#d6d6d6" stroke-width="1.1"><path d="M51 575.5h6.5M52.5 575.5v7.5M56.5 575.5v6"/><circle cx="51" cy="575.5" r="1.1" fill="#d6d6d6"/><path d="M50.5 583h3"/>
<circle cx="75" cy="575" r="1.6"/><path d="M71.5 578h7M75 577v3.5l-2.5 3M75 580.5l2.5 3M72 582l1.5-1.5"/></g></svg>
<div class="t" style="left:82.5px;top:576px;font-size:8.75px;color:#d6d6d6;font-weight:normal;-webkit-text-stroke:0.22px #d6d6d6;">Accessibility: Investigate</div>
<div class="a" style="left:728.5px;top:572px;width:24.5px;height:12px;background:#4a4a4a"></div>
<svg class="a" style="left:728px;top:573px;width:217px;height:12px" viewBox="728 572 217 12">
<g fill="none" stroke="#d8d8d8" stroke-width=".9">
<rect x="735.5" y="574" width="9" height="9.5"/><path d="M740 574v9.5M735.5 577.2h9M735.5 580.4h9"/>
<rect x="760" y="574" width="9.5" height="9"/><path d="M762 575.5v6M767.5 575.5v6M762 575.5h5.5M762 581.5h5.5"/>
<rect x="784.5" y="574" width="9" height="9"/><path d="M787.5 574v4.5h3V574"/>
</g>
<path d="M806.5 579h5" stroke="#e0e0e0" stroke-width="1.2"/>
<rect x="817" y="577.6" width="68" height="2.8" rx="1.4" fill="#7a7a7a"/>
<circle cx="850.7" cy="579" r="5.2" fill="#c4c4c4"/>
<path d="M889.5 579h5.5M892.2 576.3v5.5" stroke="#e0e0e0" stroke-width="1.2"/>
</svg>
<div class="t" style="left:907.8px;top:576px;font-size:8.2px;color:#d0d0d0;font-weight:normal;-webkit-text-stroke:0.22px #d0d0d0;">100%</div>
<div class="a" style="left:742.5px;top:108.1px;width:202.5px;height:462.69999999999993px;background:#323232"></div>
<div class="t" style="left:754.8px;top:113.2px;font-size:10.4px;color:#ececec;font-weight:normal;-webkit-text-stroke:0.22px #ececec;-webkit-text-stroke:.35px #ececec">PivotTable Fields</div>
<svg class="a" style="left:930px;top:112px;width:12px;height:12px" viewBox="0 0 12 12"><circle cx="5.7" cy="5.8" r="4.6" fill="#c4c4c4"/><path d="M3.8 3.9l3.8 3.8M7.6 3.9L3.8 7.7" stroke="#333" stroke-width="1.2"/></svg>
<div class="t" style="left:752.3px;top:144px;font-size:8.67px;color:#6c6c6c;font-weight:bold;-webkit-text-stroke:0.22px #6c6c6c;">FIELD NAME</div>
<div class="a" style="left:847.7px;top:142.5px;width:110px;height:10.2px;border-radius:3px;background:#3a3a3a;border:.8px solid #444"></div>
<svg class="a" style="left:851px;top:143px;width:10px;height:10px" viewBox="0 0 10 10"><circle cx="4.5" cy="4.5" r="2.8" fill="none" stroke="#bbb" stroke-width="1.1"/><path d="M6.5 6.5L9 9" stroke="#bbb" stroke-width="1.2"/></svg>
<div class="t" style="left:865px;top:144.3px;font-size:7.96px;color:#6f6f6f;font-weight:normal;-webkit-text-stroke:0.22px #6f6f6f;">Search fields</div>
<div class="a" style="left:747px;top:165.9px;width:198px;height:73px;background:#252726"></div>
<div class="a" style="left:934.7px;top:167.5px;width:4.8px;height:13px;border-radius:2.5px;background:#8a8a8a"></div>
<div class="a" style="left:752px;top:168.35px;width:9.5px;height:9.5px;border-radius:2px;background:#5c5c5c"></div>
<div class="t" style="left:765.5px;top:169.7px;font-size:9.1px;color:#e2e2e2;font-weight:normal;-webkit-text-stroke:0.22px #e2e2e2;">Date</div>
<div class="a" style="left:752px;top:183.23px;width:9.5px;height:9.5px;border-radius:2px;background:#2f7f4a"></div>
<svg class="a" style="left:752px;top:183.23px;width:9.5px;height:9.5px" viewBox="0 0 9.5 9.5"><path d="M2 4.8l2 2.1 3.8-4.6" fill="none" stroke="#fff" stroke-width="1.3"/></svg>
<div class="t" style="left:765.5px;top:184.57999999999998px;font-size:9.1px;color:#e2e2e2;font-weight:normal;-webkit-text-stroke:0.22px #e2e2e2;">Month</div>
<div class="a" style="left:752px;top:198.11px;width:9.5px;height:9.5px;border-radius:2px;background:#2f7f4a"></div>
<svg class="a" style="left:752px;top:198.11px;width:9.5px;height:9.5px" viewBox="0 0 9.5 9.5"><path d="M2 4.8l2 2.1 3.8-4.6" fill="none" stroke="#fff" stroke-width="1.3"/></svg>
<div class="t" style="left:765.5px;top:199.45999999999998px;font-size:9.1px;color:#e2e2e2;font-weight:normal;-webkit-text-stroke:0.22px #e2e2e2;">Year</div>
<div class="a" style="left:752px;top:212.99px;width:9.5px;height:9.5px;border-radius:2px;background:#2f7f4a"></div>
<svg class="a" style="left:752px;top:212.99px;width:9.5px;height:9.5px" viewBox="0 0 9.5 9.5"><path d="M2 4.8l2 2.1 3.8-4.6" fill="none" stroke="#fff" stroke-width="1.3"/></svg>
<div class="t" style="left:765.5px;top:214.34px;font-size:9.1px;color:#e2e2e2;font-weight:normal;-webkit-text-stroke:0.22px #e2e2e2;">Category</div>
<div class="a" style="left:752px;top:227.87px;width:9.5px;height:9.5px;border-radius:2px;background:#5c5c5c"></div>
<div class="t" style="left:765.5px;top:229.22px;font-size:9.1px;color:#e2e2e2;font-weight:normal;-webkit-text-stroke:0.22px #e2e2e2;">DocumentDate</div>
<div class="a" style="left:842px;top:246px;width:4px;height:4px;border-radius:50%;background:#555"></div>
<svg class="a" style="left:748px;top:257px;width:12px;height:11px" viewBox="0 0 12 11"><path d="M1 1.2h10L7.3 5.5v4.3H4.7V5.5z" fill="none" stroke="#d8d8d8" stroke-width="1.2" stroke-linejoin="round"/></svg>
<div class="t" style="left:765.5px;top:258.3px;font-size:9.0px;color:#e2e2e2;font-weight:normal;-webkit-text-stroke:0.22px #e2e2e2;">Filters</div>
<svg class="a" style="left:852px;top:258px;width:11px;height:9px" viewBox="0 0 11 9"><path d="M1.5 .5v8M5.3 .5v8M9.1 .5v8" stroke="#d8d8d8" stroke-width="1.8"/></svg>
<div class="t" style="left:869.3px;top:258.3px;font-size:9.0px;color:#e2e2e2;font-weight:normal;-webkit-text-stroke:0.22px #e2e2e2;">Columns</div>
<svg class="a" style="left:749.5px;top:407px;width:9px;height:10px" viewBox="0 0 9 10"><path d="M0 1h8.5M0 4h8.5M0 7h8.5M0 9.5h8.5" stroke="#d8d8d8" stroke-width="1.4"/></svg>
<div class="t" style="left:765.5px;top:407.5px;font-size:9.0px;color:#e2e2e2;font-weight:normal;-webkit-text-stroke:0.22px #e2e2e2;">Rows</div>
<svg class="a" style="left:852px;top:406px;width:11px;height:11px" viewBox="0 0 11 11"><path d="M9.5 2V1H1.5l4 4.5-4 4.5h8V9" fill="none" stroke="#d8d8d8" stroke-width="1.3" stroke-linejoin="miter"/></svg>
<div class="t" style="left:868.8px;top:407.5px;font-size:9.0px;color:#e2e2e2;font-weight:normal;-webkit-text-stroke:0.22px #e2e2e2;">Values</div>
<div class="a" style="left:746.6px;top:272px;width:92.0px;height:122.6px;background:#252726"></div>
<div class="a" style="left:850.2px;top:272px;width:90.4px;height:122.6px;background:#252726"></div>
<div class="a" style="left:747.1px;top:422.5px;width:91.3px;height:122.5px;background:#252726"></div>
<div class="a" style="left:850px;top:422.5px;width:91.5px;height:122.5px;background:#252726"></div>
<div class="a" style="left:750.7px;top:273.20px;width:84.2px;height:14.8px;background:#ffffff"></div>
<div class="a" style="left:755.9000000000001px;top:278.80px;width:1.2px;height:1.2px;background:#888"></div>
<div class="a" style="left:755.9000000000001px;top:281.60px;width:1.2px;height:1.2px;background:#888"></div>
<div class="t" style="left:761.1px;top:277.2px;font-size:8.0px;color:#505050;font-weight:normal;">Year</div>
<svg class="a" style="left:824.4px;top:276.40px;width:8.6px;height:8.6px" viewBox="0 0 8.6 8.6"><circle cx="4.3" cy="4.3" r="4.1" fill="#d2d2d2"/><circle cx="4.6" cy="2.2" r=".7" fill="#fff"/><path d="M4.6 3.6L4 6.8" stroke="#fff" stroke-width="1.1"/></svg>
<div class="a" style="left:854.2px;top:273.20px;width:83.8px;height:14.8px;background:#ffffff"></div>
<div class="a" style="left:859.4000000000001px;top:278.80px;width:1.2px;height:1.2px;background:#888"></div>
<div class="a" style="left:859.4000000000001px;top:281.60px;width:1.2px;height:1.2px;background:#888"></div>
<div class="t" style="left:864.6px;top:277.2px;font-size:8.0px;color:#505050;font-weight:normal;">Month</div>
<svg class="a" style="left:927.5px;top:276.40px;width:8.6px;height:8.6px" viewBox="0 0 8.6 8.6"><circle cx="4.3" cy="4.3" r="4.1" fill="#d2d2d2"/><circle cx="4.6" cy="2.2" r=".7" fill="#fff"/><path d="M4.6 3.6L4 6.8" stroke="#fff" stroke-width="1.1"/></svg>
<div class="a" style="left:750.8px;top:423.4px;width:83.9px;height:45.2px;background:#ffffff"></div>
<div class="a" style="left:750.8px;top:423.40px;width:83.9px;height:14.8px;background:#ffffff"></div>
<div class="a" style="left:756.0px;top:429.00px;width:1.2px;height:1.2px;background:#888"></div>
<div class="a" style="left:756.0px;top:431.80px;width:1.2px;height:1.2px;background:#888"></div>
<div class="t" style="left:761.1999999999999px;top:427.4px;font-size:8.0px;color:#505050;font-weight:normal;">Category</div>
<svg class="a" style="left:824.2px;top:426.60px;width:8.6px;height:8.6px" viewBox="0 0 8.6 8.6"><circle cx="4.3" cy="4.3" r="4.1" fill="#d2d2d2"/><circle cx="4.6" cy="2.2" r=".7" fill="#fff"/><path d="M4.6 3.6L4 6.8" stroke="#fff" stroke-width="1.1"/></svg>
<div class="a" style="left:750.8px;top:438.20px;width:83.9px;height:14.8px;background:#ffffff"></div>
<div class="a" style="left:756.0px;top:443.80px;width:1.2px;height:1.2px;background:#888"></div>
<div class="a" style="left:756.0px;top:446.60px;width:1.2px;height:1.2px;background:#888"></div>
<div class="t" style="left:761.1999999999999px;top:442.2px;font-size:8.0px;color:#505050;font-weight:normal;">Account</div>
<svg class="a" style="left:824.2px;top:441.40px;width:8.6px;height:8.6px" viewBox="0 0 8.6 8.6"><circle cx="4.3" cy="4.3" r="4.1" fill="#d2d2d2"/><circle cx="4.6" cy="2.2" r=".7" fill="#fff"/><path d="M4.6 3.6L4 6.8" stroke="#fff" stroke-width="1.1"/></svg>
<div class="a" style="left:750.8px;top:453.00px;width:83.9px;height:14.8px;background:#ffffff"></div>
<div class="a" style="left:756.0px;top:458.60px;width:1.2px;height:1.2px;background:#888"></div>
<div class="a" style="left:756.0px;top:461.40px;width:1.2px;height:1.2px;background:#888"></div>
<div class="t" style="left:761.1999999999999px;top:457.0px;font-size:8.0px;color:#505050;font-weight:normal;">Name</div>
<svg class="a" style="left:824.2px;top:456.20px;width:8.6px;height:8.6px" viewBox="0 0 8.6 8.6"><circle cx="4.3" cy="4.3" r="4.1" fill="#d2d2d2"/><circle cx="4.6" cy="2.2" r=".7" fill="#fff"/><path d="M4.6 3.6L4 6.8" stroke="#fff" stroke-width="1.1"/></svg>
<div class="a" style="left:853.5px;top:423.40px;width:84.3px;height:14.8px;background:#ffffff"></div>
<div class="a" style="left:858.7px;top:429.00px;width:1.2px;height:1.2px;background:#888"></div>
<div class="a" style="left:858.7px;top:431.80px;width:1.2px;height:1.2px;background:#888"></div>
<div class="t" style="left:863.9px;top:427.4px;font-size:8.0px;color:#505050;font-weight:normal;">Sum of Amount</div>
<svg class="a" style="left:927.3px;top:426.60px;width:8.6px;height:8.6px" viewBox="0 0 8.6 8.6"><circle cx="4.3" cy="4.3" r="4.1" fill="#d2d2d2"/><circle cx="4.6" cy="2.2" r=".7" fill="#fff"/><path d="M4.6 3.6L4 6.8" stroke="#fff" stroke-width="1.1"/></svg>
<div class="t" style="left:790.7px;top:553.2px;font-size:9.17px;color:#6e6e6e;font-weight:normal;-webkit-text-stroke:0.22px #6e6e6e;">Drag fields between areas</div>
<div class="a" style="left:736.2px;top:108.6px;width:207.4px;height:385.6px;border:2.3px solid #ee2a1a"></div>
<div class="a" style="left:943.4px;top:108px;width:1.6px;height:454.5px;background:#e6e6e6"></div>
<div class="a" style="left:943.6px;top:562.5px;width:1.4px;height:21.5px;background:#111"></div>
<div class="a" style="left:943.9px;top:2px;width:1.1px;height:104.6px;background:#161616"></div>
</body></html>
